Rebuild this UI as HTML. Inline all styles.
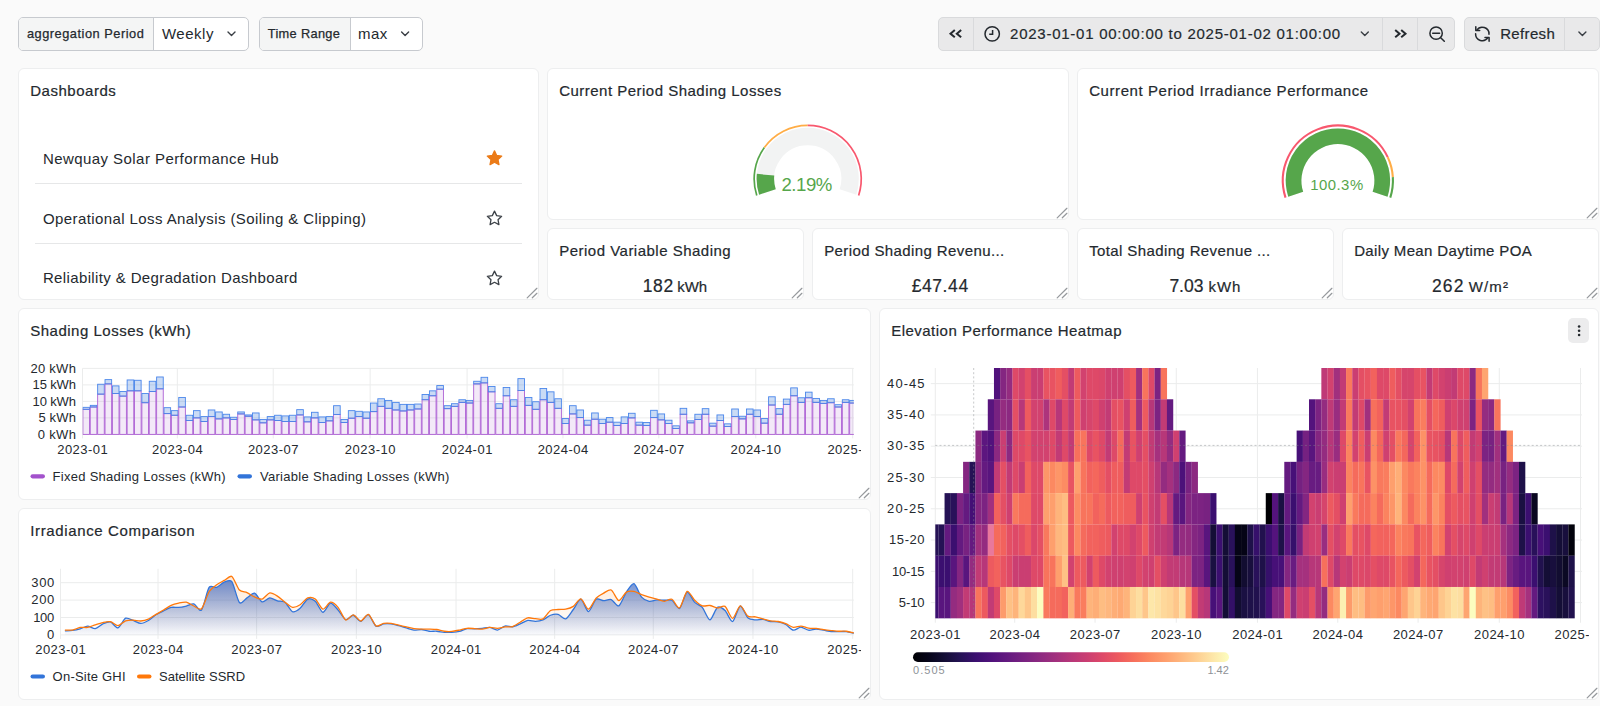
<!DOCTYPE html>
<html lang="en"><head><meta charset="utf-8"><title>Newquay Solar Performance Hub</title><style>
html,body{margin:0;padding:0}
body{width:1600px;height:706px;overflow:hidden;background:#fafafa;position:relative;font-family:"Liberation Sans",sans-serif;}
.t{position:absolute;white-space:pre;line-height:1;}
.panel{position:absolute;background:#fff;border:1px solid #edeeef;border-radius:6px;box-sizing:border-box;}
.ctl{position:absolute;box-sizing:border-box;border:1px solid #c7cacf;border-radius:5px;background:#fff;overflow:hidden}
.ctl .lab{position:absolute;left:0;top:0;bottom:0;background:#f4f5f5;border-right:1px solid #c7cacf}
.btn{position:absolute;box-sizing:border-box;background:#e9e9ea;border:1px solid #d9dadc;}
svg{position:absolute;left:0;top:0;overflow:visible}
.hr{position:absolute;height:1px;background:#e6e7e8}
</style></head><body>
<div class="panel" style="left:18px;top:68px;width:521px;height:232px"></div>
<div class="panel" style="left:547px;top:68px;width:522px;height:152px"></div>
<div class="panel" style="left:1077px;top:68px;width:522px;height:152px"></div>
<div class="panel" style="left:547px;top:228px;width:257px;height:72px"></div>
<div class="panel" style="left:812px;top:228px;width:257px;height:72px"></div>
<div class="panel" style="left:1077px;top:228px;width:257px;height:72px"></div>
<div class="panel" style="left:1342px;top:228px;width:257px;height:72px"></div>
<div class="panel" style="left:18px;top:308px;width:853px;height:192px"></div>
<div class="panel" style="left:18px;top:508px;width:853px;height:192px"></div>
<div class="panel" style="left:879px;top:308px;width:720px;height:392px"></div>
<svg width="1600" height="706"><path d="M536.9 288.3 L527.2 297.9 M536.9 293.3 L532.3 297.8" stroke="#96999d" stroke-width="1.25" fill="none" stroke-linecap="round"/></svg>
<svg width="1600" height="706"><path d="M1066.9 208.3 L1057.2 217.9 M1066.9 213.3 L1062.3 217.8" stroke="#96999d" stroke-width="1.25" fill="none" stroke-linecap="round"/></svg>
<svg width="1600" height="706"><path d="M1596.9 208.3 L1587.2 217.9 M1596.9 213.3 L1592.3 217.8" stroke="#96999d" stroke-width="1.25" fill="none" stroke-linecap="round"/></svg>
<svg width="1600" height="706"><path d="M801.9 288.3 L792.2 297.9 M801.9 293.3 L797.3 297.8" stroke="#96999d" stroke-width="1.25" fill="none" stroke-linecap="round"/></svg>
<svg width="1600" height="706"><path d="M1066.9 288.3 L1057.2 297.9 M1066.9 293.3 L1062.3 297.8" stroke="#96999d" stroke-width="1.25" fill="none" stroke-linecap="round"/></svg>
<svg width="1600" height="706"><path d="M1331.9 288.3 L1322.2 297.9 M1331.9 293.3 L1327.3 297.8" stroke="#96999d" stroke-width="1.25" fill="none" stroke-linecap="round"/></svg>
<svg width="1600" height="706"><path d="M1596.9 288.3 L1587.2 297.9 M1596.9 293.3 L1592.3 297.8" stroke="#96999d" stroke-width="1.25" fill="none" stroke-linecap="round"/></svg>
<svg width="1600" height="706"><path d="M868.9 488.3 L859.2 497.9 M868.9 493.3 L864.3 497.8" stroke="#96999d" stroke-width="1.25" fill="none" stroke-linecap="round"/></svg>
<svg width="1600" height="706"><path d="M868.9 688.3 L859.2 697.9 M868.9 693.3 L864.3 697.8" stroke="#96999d" stroke-width="1.25" fill="none" stroke-linecap="round"/></svg>
<svg width="1600" height="706"><path d="M1596.9 688.3 L1587.2 697.9 M1596.9 693.3 L1592.3 697.8" stroke="#96999d" stroke-width="1.25" fill="none" stroke-linecap="round"/></svg>
<div class="ctl" style="left:18px;top:17px;width:231px;height:34px"><div class="lab" style="width:134px"></div></div>
<div class="ctl" style="left:259px;top:17px;width:164px;height:34px"><div class="lab" style="width:90px"></div></div>
<div class="btn" style="left:938px;top:17px;width:36px;height:34px;border-radius:5px 0 0 5px"></div>
<div class="btn" style="left:973px;top:17px;width:410px;height:34px;"></div>
<div class="btn" style="left:1382px;top:17px;width:36px;height:34px;"></div>
<div class="btn" style="left:1417px;top:17px;width:38px;height:34px;border-radius:0 5px 5px 0"></div>
<div class="btn" style="left:1464px;top:17px;width:101px;height:34px;border-radius:5px 0 0 5px"></div>
<div class="btn" style="left:1564px;top:17px;width:36px;height:34px;border-radius:0 5px 5px 0"></div>
<div class="hr" style="left:34.5px;top:183px;width:487px"></div>
<div class="hr" style="left:34.5px;top:243px;width:487px"></div>
<div style="position:absolute;left:1568.4px;top:317.8px;width:21px;height:25px;border-radius:5px;background:#ececed"></div>
<svg width="1600" height="706" viewBox="0 0 1600 706"><path d="M228.0 32.05 L231.5 35.55 L235.0 32.05" stroke="#3a3f45" stroke-width="1.4" fill="none" stroke-linecap="round" stroke-linejoin="round"/>
<path d="M401.6 32.05 L405.1 35.55 L408.6 32.05" stroke="#3a3f45" stroke-width="1.4" fill="none" stroke-linecap="round" stroke-linejoin="round"/>
<path d="M1361.3 32.05 L1364.8 35.55 L1368.3 32.05" stroke="#3a3f45" stroke-width="1.4" fill="none" stroke-linecap="round" stroke-linejoin="round"/>
<path d="M1578.9 32.05 L1582.4 35.55 L1585.9 32.05" stroke="#3a3f45" stroke-width="1.4" fill="none" stroke-linecap="round" stroke-linejoin="round"/>
<path d="M954.8 30.1 L950.5 33.7 L954.8 37.300000000000004" stroke="#24292e" stroke-width="2" fill="none" stroke-linejoin="miter"/><path d="M961.15 30.1 L956.85 33.7 L961.15 37.300000000000004" stroke="#24292e" stroke-width="2" fill="none" stroke-linejoin="miter"/>
<path d="M1395.2 30.1 L1399.5 33.7 L1395.2 37.300000000000004" stroke="#24292e" stroke-width="2" fill="none" stroke-linejoin="miter"/><path d="M1401.2 30.1 L1405.5 33.7 L1401.2 37.300000000000004" stroke="#24292e" stroke-width="2" fill="none" stroke-linejoin="miter"/>
<circle cx="992.2" cy="33.9" r="7.2" stroke="#24292e" stroke-width="1.5" fill="none"/><path d="M992.6 29.9 V34.2 H989.2" stroke="#24292e" stroke-width="1.5" fill="none"/>
<circle cx="1436.1" cy="33.15" r="6.2" stroke="#24292e" stroke-width="1.5" fill="none"/><path d="M1432.7 33.15 H1439.6 M1440.7 37.7 L1444.3 41.3" stroke="#24292e" stroke-width="1.5" fill="none" stroke-linecap="round"/>
<g stroke="#24292e" stroke-width="1.5" fill="none" stroke-linecap="round" stroke-linejoin="round"><path d="M1476.7 30.3 A6.7 6.7 0 0 1 1489 34.2"/><path d="M1475.8 26.7 V30.6 H1479.7"/><path d="M1475.6 33.8 A6.7 6.7 0 0 0 1487.9 37.7"/><path d="M1485 37.4 H1489.1 V41.3"/></g>
<polygon points="494.50,150.90 496.67,155.51 501.73,156.15 498.02,159.64 498.97,164.65 494.50,162.20 490.03,164.65 490.98,159.64 487.27,156.15 492.33,155.51" fill="#eb7b18" stroke="#eb7b18" stroke-width="1.3" stroke-linejoin="round"/>
<polygon points="494.50,211.10 496.67,215.61 501.63,216.28 498.02,219.74 498.91,224.67 494.50,222.30 490.09,224.67 490.98,219.74 487.37,216.28 492.33,215.61" fill="none" stroke="#3d4248" stroke-width="1.3" stroke-linejoin="round"/>
<polygon points="494.50,271.10 496.67,275.61 501.63,276.28 498.02,279.74 498.91,284.67 494.50,282.30 490.09,284.67 490.98,279.74 487.37,276.28 492.33,275.61" fill="none" stroke="#3d4248" stroke-width="1.3" stroke-linejoin="round"/>
<path d="M767.42 191.99 A42.35 42.35 0 1 1 847.98 191.99" stroke="#f2f3f3" stroke-width="17.5" fill="none"/><path d="M767.42 191.99 A42.35 42.35 0 0 1 765.56 174.73" stroke="#56a64b" stroke-width="17.5" fill="none"/><path d="M756.77 195.45 A53.55 53.55 0 0 1 764.38 147.42" stroke="#56a64b" stroke-width="1.7" fill="none"/><path d="M764.38 147.42 A53.55 53.55 0 0 1 807.70 125.35" stroke="#ffad46" stroke-width="1.7" fill="none"/><path d="M807.70 125.35 A53.55 53.55 0 0 1 858.63 195.45" stroke="#f8586e" stroke-width="1.7" fill="none"/>
<path d="M1295.72 194.30 A44.35 44.35 0 1 1 1380.08 194.30" stroke="#f2f3f3" stroke-width="15.700000000000003" fill="none"/><path d="M1295.72 194.30 A44.35 44.35 0 1 1 1380.08 194.30" stroke="#56a64b" stroke-width="15.700000000000003" fill="none"/><path d="M1285.54 197.61 A55.05 55.05 0 0 1 1387.71 157.16" stroke="#f8586e" stroke-width="2.1" fill="none"/><path d="M1387.71 157.16 A55.05 55.05 0 0 1 1392.84 177.14" stroke="#ffad46" stroke-width="2.1" fill="none"/><path d="M1392.84 177.14 A55.05 55.05 0 0 1 1390.26 197.61" stroke="#56a64b" stroke-width="2.1" fill="none"/>
<path d="M82.5 434.40 H853.8" stroke="#ebecec" stroke-width="1"/><path d="M82.5 417.90 H853.8" stroke="#ebecec" stroke-width="1"/><path d="M82.5 401.40 H853.8" stroke="#ebecec" stroke-width="1"/><path d="M82.5 384.90 H853.8" stroke="#ebecec" stroke-width="1"/><path d="M82.5 368.40 H853.8" stroke="#ebecec" stroke-width="1"/><path d="M82.50 368.4 V438.4" stroke="#ebecec" stroke-width="1"/><path d="M177.33 368.4 V438.4" stroke="#ebecec" stroke-width="1"/><path d="M273.21 368.4 V438.4" stroke="#ebecec" stroke-width="1"/><path d="M370.14 368.4 V438.4" stroke="#ebecec" stroke-width="1"/><path d="M467.08 368.4 V438.4" stroke="#ebecec" stroke-width="1"/><path d="M562.96 368.4 V438.4" stroke="#ebecec" stroke-width="1"/><path d="M658.84 368.4 V438.4" stroke="#ebecec" stroke-width="1"/><path d="M755.77 368.4 V438.4" stroke="#ebecec" stroke-width="1"/><path d="M852.70 368.4 V438.4" stroke="#ebecec" stroke-width="1"/><clipPath id="cb"><rect x="82.5" y="366.4" width="771.3" height="69.0"/></clipPath><g clip-path="url(#cb)"><rect x="82.90" y="409.32" width="6.62" height="25.08" fill="#a352cc" fill-opacity="0.13" stroke="#ad60d4" stroke-width="0.9"/><rect x="82.90" y="407.34" width="6.62" height="1.98" fill="#3274d9" fill-opacity="0.26" stroke="#4a86ea" stroke-width="0.9"/><rect x="90.27" y="407.01" width="6.62" height="27.39" fill="#a352cc" fill-opacity="0.13" stroke="#ad60d4" stroke-width="0.9"/><rect x="90.27" y="405.36" width="6.62" height="1.65" fill="#3274d9" fill-opacity="0.26" stroke="#4a86ea" stroke-width="0.9"/><rect x="97.65" y="394.14" width="6.62" height="40.26" fill="#a352cc" fill-opacity="0.13" stroke="#ad60d4" stroke-width="0.9"/><rect x="97.65" y="384.24" width="6.62" height="9.90" fill="#3274d9" fill-opacity="0.26" stroke="#4a86ea" stroke-width="0.9"/><rect x="105.02" y="383.91" width="6.62" height="50.49" fill="#a352cc" fill-opacity="0.13" stroke="#ad60d4" stroke-width="0.9"/><rect x="105.02" y="379.62" width="6.62" height="4.29" fill="#3274d9" fill-opacity="0.26" stroke="#4a86ea" stroke-width="0.9"/><rect x="112.39" y="393.48" width="6.62" height="40.92" fill="#a352cc" fill-opacity="0.13" stroke="#ad60d4" stroke-width="0.9"/><rect x="112.39" y="385.89" width="6.62" height="7.59" fill="#3274d9" fill-opacity="0.26" stroke="#4a86ea" stroke-width="0.9"/><rect x="119.77" y="396.12" width="6.62" height="38.28" fill="#a352cc" fill-opacity="0.13" stroke="#ad60d4" stroke-width="0.9"/><rect x="119.77" y="391.50" width="6.62" height="4.62" fill="#3274d9" fill-opacity="0.26" stroke="#4a86ea" stroke-width="0.9"/><rect x="127.14" y="390.84" width="6.62" height="43.56" fill="#a352cc" fill-opacity="0.13" stroke="#ad60d4" stroke-width="0.9"/><rect x="127.14" y="379.95" width="6.62" height="10.89" fill="#3274d9" fill-opacity="0.26" stroke="#4a86ea" stroke-width="0.9"/><rect x="134.51" y="390.84" width="6.62" height="43.56" fill="#a352cc" fill-opacity="0.13" stroke="#ad60d4" stroke-width="0.9"/><rect x="134.51" y="380.28" width="6.62" height="10.56" fill="#3274d9" fill-opacity="0.26" stroke="#4a86ea" stroke-width="0.9"/><rect x="141.88" y="402.72" width="6.62" height="31.68" fill="#a352cc" fill-opacity="0.13" stroke="#ad60d4" stroke-width="0.9"/><rect x="141.88" y="393.48" width="6.62" height="9.24" fill="#3274d9" fill-opacity="0.26" stroke="#4a86ea" stroke-width="0.9"/><rect x="149.26" y="391.50" width="6.62" height="42.90" fill="#a352cc" fill-opacity="0.13" stroke="#ad60d4" stroke-width="0.9"/><rect x="149.26" y="381.27" width="6.62" height="10.23" fill="#3274d9" fill-opacity="0.26" stroke="#4a86ea" stroke-width="0.9"/><rect x="156.63" y="388.86" width="6.62" height="45.54" fill="#a352cc" fill-opacity="0.13" stroke="#ad60d4" stroke-width="0.9"/><rect x="156.63" y="376.98" width="6.62" height="11.88" fill="#3274d9" fill-opacity="0.26" stroke="#4a86ea" stroke-width="0.9"/><rect x="164.00" y="413.61" width="6.62" height="20.79" fill="#a352cc" fill-opacity="0.13" stroke="#ad60d4" stroke-width="0.9"/><rect x="164.00" y="407.67" width="6.62" height="5.94" fill="#3274d9" fill-opacity="0.26" stroke="#4a86ea" stroke-width="0.9"/><rect x="171.38" y="415.26" width="6.62" height="19.14" fill="#a352cc" fill-opacity="0.13" stroke="#ad60d4" stroke-width="0.9"/><rect x="171.38" y="410.64" width="6.62" height="4.62" fill="#3274d9" fill-opacity="0.26" stroke="#4a86ea" stroke-width="0.9"/><rect x="178.75" y="407.01" width="6.62" height="27.39" fill="#a352cc" fill-opacity="0.13" stroke="#ad60d4" stroke-width="0.9"/><rect x="178.75" y="397.44" width="6.62" height="9.57" fill="#3274d9" fill-opacity="0.26" stroke="#4a86ea" stroke-width="0.9"/><rect x="186.12" y="420.54" width="6.62" height="13.86" fill="#a352cc" fill-opacity="0.13" stroke="#ad60d4" stroke-width="0.9"/><rect x="186.12" y="415.26" width="6.62" height="5.28" fill="#3274d9" fill-opacity="0.26" stroke="#4a86ea" stroke-width="0.9"/><rect x="193.50" y="417.90" width="6.62" height="16.50" fill="#a352cc" fill-opacity="0.13" stroke="#ad60d4" stroke-width="0.9"/><rect x="193.50" y="410.64" width="6.62" height="7.26" fill="#3274d9" fill-opacity="0.26" stroke="#4a86ea" stroke-width="0.9"/><rect x="200.87" y="421.53" width="6.62" height="12.87" fill="#a352cc" fill-opacity="0.13" stroke="#ad60d4" stroke-width="0.9"/><rect x="200.87" y="416.58" width="6.62" height="4.95" fill="#3274d9" fill-opacity="0.26" stroke="#4a86ea" stroke-width="0.9"/><rect x="208.24" y="416.58" width="6.62" height="17.82" fill="#a352cc" fill-opacity="0.13" stroke="#ad60d4" stroke-width="0.9"/><rect x="208.24" y="409.98" width="6.62" height="6.60" fill="#3274d9" fill-opacity="0.26" stroke="#4a86ea" stroke-width="0.9"/><rect x="215.61" y="418.89" width="6.62" height="15.51" fill="#a352cc" fill-opacity="0.13" stroke="#ad60d4" stroke-width="0.9"/><rect x="215.61" y="411.96" width="6.62" height="6.93" fill="#3274d9" fill-opacity="0.26" stroke="#4a86ea" stroke-width="0.9"/><rect x="222.99" y="417.90" width="6.62" height="16.50" fill="#a352cc" fill-opacity="0.13" stroke="#ad60d4" stroke-width="0.9"/><rect x="222.99" y="414.27" width="6.62" height="3.63" fill="#3274d9" fill-opacity="0.26" stroke="#4a86ea" stroke-width="0.9"/><rect x="230.36" y="419.55" width="6.62" height="14.85" fill="#a352cc" fill-opacity="0.13" stroke="#ad60d4" stroke-width="0.9"/><rect x="230.36" y="417.24" width="6.62" height="2.31" fill="#3274d9" fill-opacity="0.26" stroke="#4a86ea" stroke-width="0.9"/><rect x="237.73" y="413.94" width="6.62" height="20.46" fill="#a352cc" fill-opacity="0.13" stroke="#ad60d4" stroke-width="0.9"/><rect x="237.73" y="411.96" width="6.62" height="1.98" fill="#3274d9" fill-opacity="0.26" stroke="#4a86ea" stroke-width="0.9"/><rect x="245.11" y="416.25" width="6.62" height="18.15" fill="#a352cc" fill-opacity="0.13" stroke="#ad60d4" stroke-width="0.9"/><rect x="245.11" y="414.93" width="6.62" height="1.32" fill="#3274d9" fill-opacity="0.26" stroke="#4a86ea" stroke-width="0.9"/><rect x="252.48" y="419.88" width="6.62" height="14.52" fill="#a352cc" fill-opacity="0.13" stroke="#ad60d4" stroke-width="0.9"/><rect x="252.48" y="412.95" width="6.62" height="6.93" fill="#3274d9" fill-opacity="0.26" stroke="#4a86ea" stroke-width="0.9"/><rect x="259.85" y="422.85" width="6.62" height="11.55" fill="#a352cc" fill-opacity="0.13" stroke="#ad60d4" stroke-width="0.9"/><rect x="259.85" y="419.55" width="6.62" height="3.30" fill="#3274d9" fill-opacity="0.26" stroke="#4a86ea" stroke-width="0.9"/><rect x="267.23" y="419.88" width="6.62" height="14.52" fill="#a352cc" fill-opacity="0.13" stroke="#ad60d4" stroke-width="0.9"/><rect x="267.23" y="416.58" width="6.62" height="3.30" fill="#3274d9" fill-opacity="0.26" stroke="#4a86ea" stroke-width="0.9"/><rect x="274.60" y="420.54" width="6.62" height="13.86" fill="#a352cc" fill-opacity="0.13" stroke="#ad60d4" stroke-width="0.9"/><rect x="274.60" y="415.26" width="6.62" height="5.28" fill="#3274d9" fill-opacity="0.26" stroke="#4a86ea" stroke-width="0.9"/><rect x="281.97" y="421.53" width="6.62" height="12.87" fill="#a352cc" fill-opacity="0.13" stroke="#ad60d4" stroke-width="0.9"/><rect x="281.97" y="415.92" width="6.62" height="5.61" fill="#3274d9" fill-opacity="0.26" stroke="#4a86ea" stroke-width="0.9"/><rect x="289.34" y="421.53" width="6.62" height="12.87" fill="#a352cc" fill-opacity="0.13" stroke="#ad60d4" stroke-width="0.9"/><rect x="289.34" y="415.26" width="6.62" height="6.27" fill="#3274d9" fill-opacity="0.26" stroke="#4a86ea" stroke-width="0.9"/><rect x="296.72" y="414.93" width="6.62" height="19.47" fill="#a352cc" fill-opacity="0.13" stroke="#ad60d4" stroke-width="0.9"/><rect x="296.72" y="409.65" width="6.62" height="5.28" fill="#3274d9" fill-opacity="0.26" stroke="#4a86ea" stroke-width="0.9"/><rect x="304.09" y="421.86" width="6.62" height="12.54" fill="#a352cc" fill-opacity="0.13" stroke="#ad60d4" stroke-width="0.9"/><rect x="304.09" y="416.91" width="6.62" height="4.95" fill="#3274d9" fill-opacity="0.26" stroke="#4a86ea" stroke-width="0.9"/><rect x="311.46" y="417.90" width="6.62" height="16.50" fill="#a352cc" fill-opacity="0.13" stroke="#ad60d4" stroke-width="0.9"/><rect x="311.46" y="412.29" width="6.62" height="5.61" fill="#3274d9" fill-opacity="0.26" stroke="#4a86ea" stroke-width="0.9"/><rect x="318.84" y="422.52" width="6.62" height="11.88" fill="#a352cc" fill-opacity="0.13" stroke="#ad60d4" stroke-width="0.9"/><rect x="318.84" y="416.91" width="6.62" height="5.61" fill="#3274d9" fill-opacity="0.26" stroke="#4a86ea" stroke-width="0.9"/><rect x="326.21" y="420.87" width="6.62" height="13.53" fill="#a352cc" fill-opacity="0.13" stroke="#ad60d4" stroke-width="0.9"/><rect x="326.21" y="416.58" width="6.62" height="4.29" fill="#3274d9" fill-opacity="0.26" stroke="#4a86ea" stroke-width="0.9"/><rect x="333.58" y="414.44" width="6.62" height="19.96" fill="#a352cc" fill-opacity="0.13" stroke="#ad60d4" stroke-width="0.9"/><rect x="333.58" y="405.69" width="6.62" height="8.75" fill="#3274d9" fill-opacity="0.26" stroke="#4a86ea" stroke-width="0.9"/><rect x="340.95" y="422.52" width="6.62" height="11.88" fill="#a352cc" fill-opacity="0.13" stroke="#ad60d4" stroke-width="0.9"/><rect x="340.95" y="419.55" width="6.62" height="2.97" fill="#3274d9" fill-opacity="0.26" stroke="#4a86ea" stroke-width="0.9"/><rect x="348.33" y="418.23" width="6.62" height="16.17" fill="#a352cc" fill-opacity="0.13" stroke="#ad60d4" stroke-width="0.9"/><rect x="348.33" y="410.64" width="6.62" height="7.59" fill="#3274d9" fill-opacity="0.26" stroke="#4a86ea" stroke-width="0.9"/><rect x="355.70" y="416.58" width="6.62" height="17.82" fill="#a352cc" fill-opacity="0.13" stroke="#ad60d4" stroke-width="0.9"/><rect x="355.70" y="411.30" width="6.62" height="5.28" fill="#3274d9" fill-opacity="0.26" stroke="#4a86ea" stroke-width="0.9"/><rect x="363.07" y="418.23" width="6.62" height="16.17" fill="#a352cc" fill-opacity="0.13" stroke="#ad60d4" stroke-width="0.9"/><rect x="363.07" y="411.96" width="6.62" height="6.27" fill="#3274d9" fill-opacity="0.26" stroke="#4a86ea" stroke-width="0.9"/><rect x="370.45" y="411.63" width="6.62" height="22.77" fill="#a352cc" fill-opacity="0.13" stroke="#ad60d4" stroke-width="0.9"/><rect x="370.45" y="403.05" width="6.62" height="8.58" fill="#3274d9" fill-opacity="0.26" stroke="#4a86ea" stroke-width="0.9"/><rect x="377.82" y="406.35" width="6.62" height="28.05" fill="#a352cc" fill-opacity="0.13" stroke="#ad60d4" stroke-width="0.9"/><rect x="377.82" y="398.76" width="6.62" height="7.59" fill="#3274d9" fill-opacity="0.26" stroke="#4a86ea" stroke-width="0.9"/><rect x="385.19" y="408.33" width="6.62" height="26.07" fill="#a352cc" fill-opacity="0.13" stroke="#ad60d4" stroke-width="0.9"/><rect x="385.19" y="400.41" width="6.62" height="7.92" fill="#3274d9" fill-opacity="0.26" stroke="#4a86ea" stroke-width="0.9"/><rect x="392.57" y="409.98" width="6.62" height="24.42" fill="#a352cc" fill-opacity="0.13" stroke="#ad60d4" stroke-width="0.9"/><rect x="392.57" y="402.39" width="6.62" height="7.59" fill="#3274d9" fill-opacity="0.26" stroke="#4a86ea" stroke-width="0.9"/><rect x="399.94" y="410.97" width="6.62" height="23.43" fill="#a352cc" fill-opacity="0.13" stroke="#ad60d4" stroke-width="0.9"/><rect x="399.94" y="404.37" width="6.62" height="6.60" fill="#3274d9" fill-opacity="0.26" stroke="#4a86ea" stroke-width="0.9"/><rect x="407.31" y="409.98" width="6.62" height="24.42" fill="#a352cc" fill-opacity="0.13" stroke="#ad60d4" stroke-width="0.9"/><rect x="407.31" y="404.37" width="6.62" height="5.61" fill="#3274d9" fill-opacity="0.26" stroke="#4a86ea" stroke-width="0.9"/><rect x="414.69" y="408.99" width="6.62" height="25.41" fill="#a352cc" fill-opacity="0.13" stroke="#ad60d4" stroke-width="0.9"/><rect x="414.69" y="404.04" width="6.62" height="4.95" fill="#3274d9" fill-opacity="0.26" stroke="#4a86ea" stroke-width="0.9"/><rect x="422.06" y="399.75" width="6.62" height="34.65" fill="#a352cc" fill-opacity="0.13" stroke="#ad60d4" stroke-width="0.9"/><rect x="422.06" y="394.47" width="6.62" height="5.28" fill="#3274d9" fill-opacity="0.26" stroke="#4a86ea" stroke-width="0.9"/><rect x="429.43" y="395.79" width="6.62" height="38.61" fill="#a352cc" fill-opacity="0.13" stroke="#ad60d4" stroke-width="0.9"/><rect x="429.43" y="390.84" width="6.62" height="4.95" fill="#3274d9" fill-opacity="0.26" stroke="#4a86ea" stroke-width="0.9"/><rect x="436.80" y="389.19" width="6.62" height="45.21" fill="#a352cc" fill-opacity="0.13" stroke="#ad60d4" stroke-width="0.9"/><rect x="436.80" y="385.56" width="6.62" height="3.63" fill="#3274d9" fill-opacity="0.26" stroke="#4a86ea" stroke-width="0.9"/><rect x="444.18" y="408.66" width="6.62" height="25.74" fill="#a352cc" fill-opacity="0.13" stroke="#ad60d4" stroke-width="0.9"/><rect x="444.18" y="405.69" width="6.62" height="2.97" fill="#3274d9" fill-opacity="0.26" stroke="#4a86ea" stroke-width="0.9"/><rect x="451.55" y="406.35" width="6.62" height="28.05" fill="#a352cc" fill-opacity="0.13" stroke="#ad60d4" stroke-width="0.9"/><rect x="451.55" y="403.71" width="6.62" height="2.64" fill="#3274d9" fill-opacity="0.26" stroke="#4a86ea" stroke-width="0.9"/><rect x="458.92" y="402.39" width="6.62" height="32.01" fill="#a352cc" fill-opacity="0.13" stroke="#ad60d4" stroke-width="0.9"/><rect x="458.92" y="399.75" width="6.62" height="2.64" fill="#3274d9" fill-opacity="0.26" stroke="#4a86ea" stroke-width="0.9"/><rect x="466.30" y="403.05" width="6.62" height="31.35" fill="#a352cc" fill-opacity="0.13" stroke="#ad60d4" stroke-width="0.9"/><rect x="466.30" y="400.41" width="6.62" height="2.64" fill="#3274d9" fill-opacity="0.26" stroke="#4a86ea" stroke-width="0.9"/><rect x="473.67" y="383.91" width="6.62" height="50.49" fill="#a352cc" fill-opacity="0.13" stroke="#ad60d4" stroke-width="0.9"/><rect x="473.67" y="381.27" width="6.62" height="2.64" fill="#3274d9" fill-opacity="0.26" stroke="#4a86ea" stroke-width="0.9"/><rect x="481.04" y="382.92" width="6.62" height="51.48" fill="#a352cc" fill-opacity="0.13" stroke="#ad60d4" stroke-width="0.9"/><rect x="481.04" y="377.31" width="6.62" height="5.61" fill="#3274d9" fill-opacity="0.26" stroke="#4a86ea" stroke-width="0.9"/><rect x="488.41" y="391.83" width="6.62" height="42.57" fill="#a352cc" fill-opacity="0.13" stroke="#ad60d4" stroke-width="0.9"/><rect x="488.41" y="386.55" width="6.62" height="5.28" fill="#3274d9" fill-opacity="0.26" stroke="#4a86ea" stroke-width="0.9"/><rect x="495.79" y="408.33" width="6.62" height="26.07" fill="#a352cc" fill-opacity="0.13" stroke="#ad60d4" stroke-width="0.9"/><rect x="495.79" y="403.71" width="6.62" height="4.62" fill="#3274d9" fill-opacity="0.26" stroke="#4a86ea" stroke-width="0.9"/><rect x="503.16" y="395.79" width="6.62" height="38.61" fill="#a352cc" fill-opacity="0.13" stroke="#ad60d4" stroke-width="0.9"/><rect x="503.16" y="387.54" width="6.62" height="8.25" fill="#3274d9" fill-opacity="0.26" stroke="#4a86ea" stroke-width="0.9"/><rect x="510.53" y="406.35" width="6.62" height="28.05" fill="#a352cc" fill-opacity="0.13" stroke="#ad60d4" stroke-width="0.9"/><rect x="510.53" y="399.75" width="6.62" height="6.60" fill="#3274d9" fill-opacity="0.26" stroke="#4a86ea" stroke-width="0.9"/><rect x="517.91" y="390.51" width="6.62" height="43.89" fill="#a352cc" fill-opacity="0.13" stroke="#ad60d4" stroke-width="0.9"/><rect x="517.91" y="378.63" width="6.62" height="11.88" fill="#3274d9" fill-opacity="0.26" stroke="#4a86ea" stroke-width="0.9"/><rect x="525.28" y="405.36" width="6.62" height="29.04" fill="#a352cc" fill-opacity="0.13" stroke="#ad60d4" stroke-width="0.9"/><rect x="525.28" y="397.44" width="6.62" height="7.92" fill="#3274d9" fill-opacity="0.26" stroke="#4a86ea" stroke-width="0.9"/><rect x="532.65" y="409.32" width="6.62" height="25.08" fill="#a352cc" fill-opacity="0.13" stroke="#ad60d4" stroke-width="0.9"/><rect x="532.65" y="401.73" width="6.62" height="7.59" fill="#3274d9" fill-opacity="0.26" stroke="#4a86ea" stroke-width="0.9"/><rect x="540.03" y="399.75" width="6.62" height="34.65" fill="#a352cc" fill-opacity="0.13" stroke="#ad60d4" stroke-width="0.9"/><rect x="540.03" y="388.53" width="6.62" height="11.22" fill="#3274d9" fill-opacity="0.26" stroke="#4a86ea" stroke-width="0.9"/><rect x="547.40" y="402.39" width="6.62" height="32.01" fill="#a352cc" fill-opacity="0.13" stroke="#ad60d4" stroke-width="0.9"/><rect x="547.40" y="391.83" width="6.62" height="10.56" fill="#3274d9" fill-opacity="0.26" stroke="#4a86ea" stroke-width="0.9"/><rect x="554.77" y="408.33" width="6.62" height="26.07" fill="#a352cc" fill-opacity="0.13" stroke="#ad60d4" stroke-width="0.9"/><rect x="554.77" y="398.76" width="6.62" height="9.57" fill="#3274d9" fill-opacity="0.26" stroke="#4a86ea" stroke-width="0.9"/><rect x="562.14" y="423.51" width="6.62" height="10.89" fill="#a352cc" fill-opacity="0.13" stroke="#ad60d4" stroke-width="0.9"/><rect x="562.14" y="418.56" width="6.62" height="4.95" fill="#3274d9" fill-opacity="0.26" stroke="#4a86ea" stroke-width="0.9"/><rect x="569.52" y="413.94" width="6.62" height="20.46" fill="#a352cc" fill-opacity="0.13" stroke="#ad60d4" stroke-width="0.9"/><rect x="569.52" y="405.69" width="6.62" height="8.25" fill="#3274d9" fill-opacity="0.26" stroke="#4a86ea" stroke-width="0.9"/><rect x="576.89" y="417.57" width="6.62" height="16.83" fill="#a352cc" fill-opacity="0.13" stroke="#ad60d4" stroke-width="0.9"/><rect x="576.89" y="409.98" width="6.62" height="7.59" fill="#3274d9" fill-opacity="0.26" stroke="#4a86ea" stroke-width="0.9"/><rect x="584.26" y="425.16" width="6.62" height="9.24" fill="#a352cc" fill-opacity="0.13" stroke="#ad60d4" stroke-width="0.9"/><rect x="584.26" y="420.21" width="6.62" height="4.95" fill="#3274d9" fill-opacity="0.26" stroke="#4a86ea" stroke-width="0.9"/><rect x="591.64" y="419.22" width="6.62" height="15.18" fill="#a352cc" fill-opacity="0.13" stroke="#ad60d4" stroke-width="0.9"/><rect x="591.64" y="412.95" width="6.62" height="6.27" fill="#3274d9" fill-opacity="0.26" stroke="#4a86ea" stroke-width="0.9"/><rect x="599.01" y="423.51" width="6.62" height="10.89" fill="#a352cc" fill-opacity="0.13" stroke="#ad60d4" stroke-width="0.9"/><rect x="599.01" y="419.22" width="6.62" height="4.29" fill="#3274d9" fill-opacity="0.26" stroke="#4a86ea" stroke-width="0.9"/><rect x="606.38" y="422.19" width="6.62" height="12.21" fill="#a352cc" fill-opacity="0.13" stroke="#ad60d4" stroke-width="0.9"/><rect x="606.38" y="417.57" width="6.62" height="4.62" fill="#3274d9" fill-opacity="0.26" stroke="#4a86ea" stroke-width="0.9"/><rect x="613.76" y="425.49" width="6.62" height="8.91" fill="#a352cc" fill-opacity="0.13" stroke="#ad60d4" stroke-width="0.9"/><rect x="613.76" y="422.19" width="6.62" height="3.30" fill="#3274d9" fill-opacity="0.26" stroke="#4a86ea" stroke-width="0.9"/><rect x="621.13" y="423.51" width="6.62" height="10.89" fill="#a352cc" fill-opacity="0.13" stroke="#ad60d4" stroke-width="0.9"/><rect x="621.13" y="416.91" width="6.62" height="6.60" fill="#3274d9" fill-opacity="0.26" stroke="#4a86ea" stroke-width="0.9"/><rect x="628.50" y="417.90" width="6.62" height="16.50" fill="#a352cc" fill-opacity="0.13" stroke="#ad60d4" stroke-width="0.9"/><rect x="628.50" y="413.28" width="6.62" height="4.62" fill="#3274d9" fill-opacity="0.26" stroke="#4a86ea" stroke-width="0.9"/><rect x="635.88" y="425.16" width="6.62" height="9.24" fill="#a352cc" fill-opacity="0.13" stroke="#ad60d4" stroke-width="0.9"/><rect x="635.88" y="422.19" width="6.62" height="2.97" fill="#3274d9" fill-opacity="0.26" stroke="#4a86ea" stroke-width="0.9"/><rect x="643.25" y="425.49" width="6.62" height="8.91" fill="#a352cc" fill-opacity="0.13" stroke="#ad60d4" stroke-width="0.9"/><rect x="643.25" y="422.52" width="6.62" height="2.97" fill="#3274d9" fill-opacity="0.26" stroke="#4a86ea" stroke-width="0.9"/><rect x="650.62" y="417.57" width="6.62" height="16.83" fill="#a352cc" fill-opacity="0.13" stroke="#ad60d4" stroke-width="0.9"/><rect x="650.62" y="410.31" width="6.62" height="7.26" fill="#3274d9" fill-opacity="0.26" stroke="#4a86ea" stroke-width="0.9"/><rect x="657.99" y="419.88" width="6.62" height="14.52" fill="#a352cc" fill-opacity="0.13" stroke="#ad60d4" stroke-width="0.9"/><rect x="657.99" y="413.94" width="6.62" height="5.94" fill="#3274d9" fill-opacity="0.26" stroke="#4a86ea" stroke-width="0.9"/><rect x="665.37" y="423.51" width="6.62" height="10.89" fill="#a352cc" fill-opacity="0.13" stroke="#ad60d4" stroke-width="0.9"/><rect x="665.37" y="420.21" width="6.62" height="3.30" fill="#3274d9" fill-opacity="0.26" stroke="#4a86ea" stroke-width="0.9"/><rect x="672.74" y="428.46" width="6.62" height="5.94" fill="#a352cc" fill-opacity="0.13" stroke="#ad60d4" stroke-width="0.9"/><rect x="672.74" y="425.82" width="6.62" height="2.64" fill="#3274d9" fill-opacity="0.26" stroke="#4a86ea" stroke-width="0.9"/><rect x="680.11" y="414.27" width="6.62" height="20.13" fill="#a352cc" fill-opacity="0.13" stroke="#ad60d4" stroke-width="0.9"/><rect x="680.11" y="408.33" width="6.62" height="5.94" fill="#3274d9" fill-opacity="0.26" stroke="#4a86ea" stroke-width="0.9"/><rect x="687.49" y="422.85" width="6.62" height="11.55" fill="#a352cc" fill-opacity="0.13" stroke="#ad60d4" stroke-width="0.9"/><rect x="687.49" y="420.87" width="6.62" height="1.98" fill="#3274d9" fill-opacity="0.26" stroke="#4a86ea" stroke-width="0.9"/><rect x="694.86" y="419.55" width="6.62" height="14.85" fill="#a352cc" fill-opacity="0.13" stroke="#ad60d4" stroke-width="0.9"/><rect x="694.86" y="414.27" width="6.62" height="5.28" fill="#3274d9" fill-opacity="0.26" stroke="#4a86ea" stroke-width="0.9"/><rect x="702.23" y="414.27" width="6.62" height="20.13" fill="#a352cc" fill-opacity="0.13" stroke="#ad60d4" stroke-width="0.9"/><rect x="702.23" y="408.66" width="6.62" height="5.61" fill="#3274d9" fill-opacity="0.26" stroke="#4a86ea" stroke-width="0.9"/><rect x="709.61" y="426.15" width="6.62" height="8.25" fill="#a352cc" fill-opacity="0.13" stroke="#ad60d4" stroke-width="0.9"/><rect x="709.61" y="423.18" width="6.62" height="2.97" fill="#3274d9" fill-opacity="0.26" stroke="#4a86ea" stroke-width="0.9"/><rect x="716.98" y="420.54" width="6.62" height="13.86" fill="#a352cc" fill-opacity="0.13" stroke="#ad60d4" stroke-width="0.9"/><rect x="716.98" y="414.93" width="6.62" height="5.61" fill="#3274d9" fill-opacity="0.26" stroke="#4a86ea" stroke-width="0.9"/><rect x="724.35" y="426.48" width="6.62" height="7.92" fill="#a352cc" fill-opacity="0.13" stroke="#ad60d4" stroke-width="0.9"/><rect x="724.35" y="423.84" width="6.62" height="2.64" fill="#3274d9" fill-opacity="0.26" stroke="#4a86ea" stroke-width="0.9"/><rect x="731.72" y="416.58" width="6.62" height="17.82" fill="#a352cc" fill-opacity="0.13" stroke="#ad60d4" stroke-width="0.9"/><rect x="731.72" y="408.99" width="6.62" height="7.59" fill="#3274d9" fill-opacity="0.26" stroke="#4a86ea" stroke-width="0.9"/><rect x="739.10" y="418.89" width="6.62" height="15.51" fill="#a352cc" fill-opacity="0.13" stroke="#ad60d4" stroke-width="0.9"/><rect x="739.10" y="416.25" width="6.62" height="2.64" fill="#3274d9" fill-opacity="0.26" stroke="#4a86ea" stroke-width="0.9"/><rect x="746.47" y="414.27" width="6.62" height="20.13" fill="#a352cc" fill-opacity="0.13" stroke="#ad60d4" stroke-width="0.9"/><rect x="746.47" y="408.99" width="6.62" height="5.28" fill="#3274d9" fill-opacity="0.26" stroke="#4a86ea" stroke-width="0.9"/><rect x="753.84" y="416.58" width="6.62" height="17.82" fill="#a352cc" fill-opacity="0.13" stroke="#ad60d4" stroke-width="0.9"/><rect x="753.84" y="409.98" width="6.62" height="6.60" fill="#3274d9" fill-opacity="0.26" stroke="#4a86ea" stroke-width="0.9"/><rect x="761.22" y="423.18" width="6.62" height="11.22" fill="#a352cc" fill-opacity="0.13" stroke="#ad60d4" stroke-width="0.9"/><rect x="761.22" y="418.56" width="6.62" height="4.62" fill="#3274d9" fill-opacity="0.26" stroke="#4a86ea" stroke-width="0.9"/><rect x="768.59" y="405.03" width="6.62" height="29.37" fill="#a352cc" fill-opacity="0.13" stroke="#ad60d4" stroke-width="0.9"/><rect x="768.59" y="396.78" width="6.62" height="8.25" fill="#3274d9" fill-opacity="0.26" stroke="#4a86ea" stroke-width="0.9"/><rect x="775.96" y="414.27" width="6.62" height="20.13" fill="#a352cc" fill-opacity="0.13" stroke="#ad60d4" stroke-width="0.9"/><rect x="775.96" y="408.66" width="6.62" height="5.61" fill="#3274d9" fill-opacity="0.26" stroke="#4a86ea" stroke-width="0.9"/><rect x="783.34" y="404.37" width="6.62" height="30.03" fill="#a352cc" fill-opacity="0.13" stroke="#ad60d4" stroke-width="0.9"/><rect x="783.34" y="399.09" width="6.62" height="5.28" fill="#3274d9" fill-opacity="0.26" stroke="#4a86ea" stroke-width="0.9"/><rect x="790.71" y="395.79" width="6.62" height="38.61" fill="#a352cc" fill-opacity="0.13" stroke="#ad60d4" stroke-width="0.9"/><rect x="790.71" y="387.87" width="6.62" height="7.92" fill="#3274d9" fill-opacity="0.26" stroke="#4a86ea" stroke-width="0.9"/><rect x="798.08" y="402.39" width="6.62" height="32.01" fill="#a352cc" fill-opacity="0.13" stroke="#ad60d4" stroke-width="0.9"/><rect x="798.08" y="397.77" width="6.62" height="4.62" fill="#3274d9" fill-opacity="0.26" stroke="#4a86ea" stroke-width="0.9"/><rect x="805.45" y="397.77" width="6.62" height="36.63" fill="#a352cc" fill-opacity="0.13" stroke="#ad60d4" stroke-width="0.9"/><rect x="805.45" y="392.16" width="6.62" height="5.61" fill="#3274d9" fill-opacity="0.26" stroke="#4a86ea" stroke-width="0.9"/><rect x="812.83" y="402.39" width="6.62" height="32.01" fill="#a352cc" fill-opacity="0.13" stroke="#ad60d4" stroke-width="0.9"/><rect x="812.83" y="398.43" width="6.62" height="3.96" fill="#3274d9" fill-opacity="0.26" stroke="#4a86ea" stroke-width="0.9"/><rect x="820.20" y="403.38" width="6.62" height="31.02" fill="#a352cc" fill-opacity="0.13" stroke="#ad60d4" stroke-width="0.9"/><rect x="820.20" y="400.41" width="6.62" height="2.97" fill="#3274d9" fill-opacity="0.26" stroke="#4a86ea" stroke-width="0.9"/><rect x="827.57" y="402.72" width="6.62" height="31.68" fill="#a352cc" fill-opacity="0.13" stroke="#ad60d4" stroke-width="0.9"/><rect x="827.57" y="398.76" width="6.62" height="3.96" fill="#3274d9" fill-opacity="0.26" stroke="#4a86ea" stroke-width="0.9"/><rect x="834.95" y="407.01" width="6.62" height="27.39" fill="#a352cc" fill-opacity="0.13" stroke="#ad60d4" stroke-width="0.9"/><rect x="834.95" y="404.70" width="6.62" height="2.31" fill="#3274d9" fill-opacity="0.26" stroke="#4a86ea" stroke-width="0.9"/><rect x="842.32" y="402.39" width="6.62" height="32.01" fill="#a352cc" fill-opacity="0.13" stroke="#ad60d4" stroke-width="0.9"/><rect x="842.32" y="399.75" width="6.62" height="2.64" fill="#3274d9" fill-opacity="0.26" stroke="#4a86ea" stroke-width="0.9"/><rect x="849.69" y="403.05" width="6.62" height="31.35" fill="#a352cc" fill-opacity="0.13" stroke="#ad60d4" stroke-width="0.9"/><rect x="849.69" y="400.41" width="6.62" height="2.64" fill="#3274d9" fill-opacity="0.26" stroke="#4a86ea" stroke-width="0.9"/></g>
<rect x="30.5" y="474.2" width="14.5" height="4.2" rx="2.1" fill="#a352cc"/>
<rect x="237.5" y="474.2" width="14.5" height="4.2" rx="2.1" fill="#3274d9"/>
<path d="M60.5 634.90 H853.8" stroke="#ebecec" stroke-width="1"/><path d="M60.5 617.50 H853.8" stroke="#ebecec" stroke-width="1"/><path d="M60.5 600.10 H853.8" stroke="#ebecec" stroke-width="1"/><path d="M60.5 582.70 H853.8" stroke="#ebecec" stroke-width="1"/><path d="M60.50 568.8 V638.9" stroke="#ebecec" stroke-width="1"/><path d="M158.03 568.8 V638.9" stroke="#ebecec" stroke-width="1"/><path d="M256.65 568.8 V638.9" stroke="#ebecec" stroke-width="1"/><path d="M356.35 568.8 V638.9" stroke="#ebecec" stroke-width="1"/><path d="M456.04 568.8 V638.9" stroke="#ebecec" stroke-width="1"/><path d="M554.66 568.8 V638.9" stroke="#ebecec" stroke-width="1"/><path d="M653.28 568.8 V638.9" stroke="#ebecec" stroke-width="1"/><path d="M752.97 568.8 V638.9" stroke="#ebecec" stroke-width="1"/><path d="M852.67 568.8 V638.9" stroke="#ebecec" stroke-width="1"/><defs><linearGradient id="gb" x1="0" y1="0" x2="0" y2="1"><stop offset="0" stop-color="#3d69c4" stop-opacity="0.74"/><stop offset="1" stop-color="#3f66b8" stop-opacity="0.03"/></linearGradient><linearGradient id="go" x1="0" y1="0" x2="0" y2="1"><stop offset="0" stop-color="#ff780a" stop-opacity="0.17"/><stop offset="1" stop-color="#ff780a" stop-opacity="0.0"/></linearGradient></defs><path d="M64.90 630.03 C65.89 630.03 70.52 630.37 72.49 630.03 C74.46 629.69 78.10 627.76 80.08 627.42 C82.05 627.08 85.69 627.76 87.66 627.42 C89.64 627.08 93.28 625.44 95.25 624.81 C97.22 624.17 100.87 622.95 102.84 622.55 C104.81 622.14 108.46 621.27 110.43 621.68 C112.40 622.08 116.04 625.79 118.02 625.68 C119.99 625.56 123.63 621.53 125.60 620.81 C127.58 620.08 131.22 620.09 133.19 620.11 C135.16 620.13 138.81 621.12 140.78 620.98 C142.75 620.84 146.40 619.93 148.37 619.07 C150.34 618.21 153.98 615.54 155.96 614.37 C157.93 613.19 161.57 611.19 163.54 610.02 C165.52 608.84 169.16 606.22 171.13 605.32 C173.10 604.42 176.75 603.47 178.72 603.06 C180.69 602.65 184.34 601.80 186.31 602.19 C188.28 602.57 191.92 605.16 193.90 606.02 C195.87 606.88 199.51 610.65 201.48 608.80 C203.46 606.95 207.10 594.87 209.07 591.75 C211.04 588.63 214.69 586.26 216.66 584.79 C218.63 583.32 222.28 581.52 224.25 580.44 C226.22 579.35 229.86 575.19 231.84 576.44 C233.81 577.68 237.45 587.90 239.42 590.01 C241.40 592.11 245.04 591.71 247.01 592.62 C248.98 593.52 252.63 596.13 254.60 596.97 C256.57 597.80 260.22 599.58 262.19 599.06 C264.16 598.54 267.80 593.35 269.78 592.97 C271.75 592.58 275.39 594.90 277.36 596.10 C279.34 597.30 282.98 600.72 284.95 602.19 C286.92 603.66 290.57 607.07 292.54 607.41 C294.51 607.75 298.16 606.04 300.13 604.80 C302.10 603.55 305.74 598.58 307.72 597.84 C309.69 597.09 313.33 597.59 315.30 599.06 C317.28 600.53 320.92 608.74 322.89 609.15 C324.86 609.56 328.51 602.41 330.48 602.19 C332.45 601.96 336.10 605.10 338.07 607.41 C340.04 609.72 343.68 618.96 345.66 619.94 C347.63 620.91 351.27 614.75 353.24 614.89 C355.22 615.03 358.86 621.05 360.83 620.98 C362.80 620.91 366.45 613.73 368.42 614.37 C370.39 615.00 374.04 624.68 376.01 625.85 C377.98 627.03 381.62 623.73 383.60 623.42 C385.57 623.10 389.21 623.19 391.18 623.42 C393.16 623.64 396.80 624.70 398.77 625.16 C400.74 625.61 404.39 626.44 406.36 626.90 C408.33 627.35 411.98 628.34 413.95 628.64 C415.92 628.93 419.56 629.09 421.54 629.16 C423.51 629.23 427.15 629.11 429.12 629.16 C431.10 629.20 434.74 629.23 436.71 629.51 C438.68 629.78 442.33 631.00 444.30 631.25 C446.27 631.49 449.92 631.58 451.89 631.42 C453.86 631.26 457.50 630.44 459.48 630.03 C461.45 629.62 465.09 628.47 467.06 628.29 C469.04 628.11 472.68 628.52 474.65 628.64 C476.62 628.75 480.27 629.32 482.24 629.16 C484.21 629.00 487.86 627.53 489.83 627.42 C491.80 627.30 495.44 628.36 497.42 628.29 C499.39 628.22 503.03 627.12 505.00 626.90 C506.98 626.67 510.62 627.16 512.59 626.55 C514.56 625.94 518.21 623.33 520.18 622.20 C522.15 621.07 525.80 618.30 527.77 617.85 C529.74 617.40 533.38 618.58 535.36 618.72 C537.33 618.85 540.97 619.96 542.94 618.89 C544.92 617.83 548.56 611.76 550.53 610.54 C552.50 609.32 556.15 609.68 558.12 609.50 C560.09 609.32 563.74 609.56 565.71 609.15 C567.68 608.74 571.32 607.70 573.30 606.36 C575.27 605.03 578.91 598.52 580.88 598.88 C582.86 599.24 586.50 609.24 588.47 609.15 C590.44 609.06 594.09 600.27 596.06 598.19 C598.03 596.10 601.68 594.20 603.65 593.14 C605.62 592.08 609.26 589.04 611.24 590.01 C613.21 590.98 616.85 600.35 618.82 600.62 C620.80 600.89 624.44 593.29 626.41 592.10 C628.38 590.90 632.03 591.06 634.00 591.40 C635.97 591.74 639.62 593.96 641.59 594.71 C643.56 595.45 647.20 596.55 649.18 597.14 C651.15 597.73 654.79 598.69 656.76 599.23 C658.74 599.77 662.38 601.32 664.35 601.32 C666.32 601.32 669.97 598.37 671.94 599.23 C673.91 600.09 677.56 608.95 679.53 607.93 C681.50 606.91 685.14 592.40 687.12 591.40 C689.09 590.40 692.73 598.40 694.70 600.27 C696.68 602.15 700.32 605.16 702.29 605.84 C704.26 606.52 707.91 605.22 709.88 605.49 C711.85 605.77 715.50 607.82 717.47 607.93 C719.44 608.04 723.08 605.01 725.06 606.36 C727.03 607.72 730.67 618.44 732.64 618.37 C734.62 618.30 738.26 606.14 740.23 605.84 C742.20 605.55 745.85 614.68 747.82 616.11 C749.79 617.53 753.44 616.44 755.41 616.80 C757.38 617.17 761.02 618.37 763.00 618.89 C764.97 619.41 768.61 620.47 770.58 620.81 C772.56 621.15 776.20 621.14 778.17 621.50 C780.14 621.86 783.79 622.82 785.76 623.59 C787.73 624.36 791.38 627.10 793.35 627.42 C795.32 627.73 798.96 625.94 800.94 626.03 C802.91 626.12 806.55 627.80 808.52 628.11 C810.50 628.43 814.14 628.26 816.11 628.46 C818.08 628.67 821.73 629.41 823.70 629.68 C825.67 629.95 829.32 630.35 831.29 630.55 C833.26 630.75 836.90 631.16 838.88 631.25 C840.85 631.34 844.52 631.04 846.46 631.25 C848.40 631.45 852.85 632.61 853.80 632.81 L853.80 634.9 L64.90 634.9 Z" fill="url(#go)" /><path d="M64.90 630.90 C65.89 630.83 70.52 630.65 72.49 630.38 C74.46 630.10 78.10 629.35 80.08 628.81 C82.05 628.27 85.69 626.22 87.66 626.20 C89.64 626.18 93.28 628.93 95.25 628.64 C97.22 628.34 100.87 624.82 102.84 623.94 C104.81 623.06 108.46 621.33 110.43 621.85 C112.40 622.37 116.04 628.42 118.02 627.94 C119.99 627.46 123.63 619.17 125.60 618.20 C127.58 617.22 131.22 619.78 133.19 620.46 C135.16 621.14 138.81 623.42 140.78 623.42 C142.75 623.42 146.40 621.59 148.37 620.46 C150.34 619.33 153.98 615.96 155.96 614.72 C157.93 613.47 161.57 611.84 163.54 610.89 C165.52 609.94 169.16 607.86 171.13 607.41 C173.10 606.96 176.75 607.59 178.72 607.41 C180.69 607.23 184.34 606.47 186.31 606.02 C188.28 605.56 191.92 603.41 193.90 603.93 C195.87 604.45 199.51 612.17 201.48 610.02 C203.46 607.87 207.10 590.34 209.07 587.40 C211.04 584.46 214.69 588.08 216.66 587.40 C218.63 586.72 222.28 582.92 224.25 582.18 C226.22 581.43 229.86 579.01 231.84 581.66 C233.81 584.30 237.45 600.43 239.42 602.54 C241.40 604.64 245.04 599.06 247.01 597.84 C248.98 596.62 252.63 592.62 254.60 593.14 C256.57 593.66 260.22 601.23 262.19 601.84 C264.16 602.45 267.80 597.97 269.78 597.84 C271.75 597.70 275.39 600.23 277.36 600.80 C279.34 601.36 282.98 600.76 284.95 602.19 C286.92 603.61 290.57 610.97 292.54 611.76 C294.51 612.55 298.16 609.93 300.13 608.28 C302.10 606.63 305.74 599.96 307.72 599.06 C309.69 598.15 313.33 599.60 315.30 601.32 C317.28 603.04 320.92 612.05 322.89 612.28 C324.86 612.51 328.51 603.35 330.48 603.06 C332.45 602.76 336.10 607.87 338.07 610.02 C340.04 612.17 343.68 618.91 345.66 619.59 C347.63 620.27 351.27 615.01 353.24 615.24 C355.22 615.46 358.86 621.40 360.83 621.33 C362.80 621.26 366.45 614.08 368.42 614.72 C370.39 615.35 374.04 625.00 376.01 626.20 C377.98 627.40 381.62 624.23 383.60 623.94 C385.57 623.64 389.21 623.71 391.18 623.94 C393.16 624.16 396.80 625.16 398.77 625.68 C400.74 626.20 404.39 627.37 406.36 627.94 C408.33 628.51 411.98 629.82 413.95 630.03 C415.92 630.23 419.56 629.35 421.54 629.51 C423.51 629.66 427.15 631.02 429.12 631.25 C431.10 631.47 434.74 631.11 436.71 631.25 C438.68 631.38 442.33 632.15 444.30 632.29 C446.27 632.43 449.92 632.40 451.89 632.29 C453.86 632.18 457.50 631.90 459.48 631.42 C461.45 630.94 465.09 628.98 467.06 628.64 C469.04 628.30 472.68 628.86 474.65 628.81 C476.62 628.76 480.27 628.47 482.24 628.29 C484.21 628.11 487.86 627.19 489.83 627.42 C491.80 627.64 495.44 630.21 497.42 630.03 C499.39 629.85 503.03 626.43 505.00 626.03 C506.98 625.62 510.62 627.17 512.59 626.90 C514.56 626.62 518.21 624.77 520.18 623.94 C522.15 623.10 525.80 620.80 527.77 620.46 C529.74 620.12 533.38 621.40 535.36 621.33 C537.33 621.26 540.97 620.73 542.94 619.94 C544.92 619.14 548.56 615.96 550.53 615.24 C552.50 614.51 556.15 613.89 558.12 614.37 C560.09 614.84 563.74 619.53 565.71 618.89 C567.68 618.26 571.32 612.05 573.30 609.50 C575.27 606.94 578.91 598.96 580.88 599.23 C582.86 599.50 586.50 611.58 588.47 611.58 C590.44 611.58 594.09 600.66 596.06 599.23 C598.03 597.80 601.68 600.58 603.65 600.62 C605.62 600.67 609.26 598.90 611.24 599.58 C613.21 600.26 616.85 606.81 618.82 605.84 C620.80 604.87 624.44 594.97 626.41 592.10 C628.38 589.22 632.03 583.09 634.00 583.74 C635.97 584.40 639.62 594.86 641.59 597.14 C643.56 599.43 647.20 600.96 649.18 601.32 C651.15 601.68 654.79 600.06 656.76 599.93 C658.74 599.79 662.38 600.23 664.35 600.27 C666.32 600.32 669.97 599.21 671.94 600.27 C673.91 601.34 677.56 609.52 679.53 608.45 C681.50 607.39 685.14 592.89 687.12 592.10 C689.09 591.30 692.73 600.37 694.70 602.36 C696.68 604.35 700.32 605.12 702.29 607.41 C704.26 609.69 707.91 619.94 709.88 619.94 C711.85 619.94 715.50 608.63 717.47 607.41 C719.44 606.19 723.08 608.71 725.06 610.54 C727.03 612.37 730.67 622.09 732.64 621.50 C734.62 620.91 738.26 606.49 740.23 606.02 C742.20 605.54 745.85 616.04 747.82 617.85 C749.79 619.66 753.44 619.73 755.41 619.94 C757.38 620.14 761.02 619.21 763.00 619.41 C764.97 619.62 768.61 621.19 770.58 621.50 C772.56 621.82 776.20 621.47 778.17 621.85 C780.14 622.23 783.79 623.37 785.76 624.46 C787.73 625.55 791.38 629.86 793.35 630.20 C795.32 630.54 798.96 627.07 800.94 627.07 C802.91 627.07 806.55 629.93 808.52 630.20 C810.50 630.47 814.14 629.16 816.11 629.16 C818.08 629.16 821.73 629.89 823.70 630.20 C825.67 630.52 829.32 631.41 831.29 631.59 C833.26 631.77 836.90 631.59 838.88 631.59 C840.85 631.59 844.52 631.39 846.46 631.59 C848.40 631.80 852.85 632.96 853.80 633.16 L853.80 634.9 L64.90 634.9 Z" fill="url(#gb)" /><path d="M64.90 630.90 C65.89 630.83 70.52 630.65 72.49 630.38 C74.46 630.10 78.10 629.35 80.08 628.81 C82.05 628.27 85.69 626.22 87.66 626.20 C89.64 626.18 93.28 628.93 95.25 628.64 C97.22 628.34 100.87 624.82 102.84 623.94 C104.81 623.06 108.46 621.33 110.43 621.85 C112.40 622.37 116.04 628.42 118.02 627.94 C119.99 627.46 123.63 619.17 125.60 618.20 C127.58 617.22 131.22 619.78 133.19 620.46 C135.16 621.14 138.81 623.42 140.78 623.42 C142.75 623.42 146.40 621.59 148.37 620.46 C150.34 619.33 153.98 615.96 155.96 614.72 C157.93 613.47 161.57 611.84 163.54 610.89 C165.52 609.94 169.16 607.86 171.13 607.41 C173.10 606.96 176.75 607.59 178.72 607.41 C180.69 607.23 184.34 606.47 186.31 606.02 C188.28 605.56 191.92 603.41 193.90 603.93 C195.87 604.45 199.51 612.17 201.48 610.02 C203.46 607.87 207.10 590.34 209.07 587.40 C211.04 584.46 214.69 588.08 216.66 587.40 C218.63 586.72 222.28 582.92 224.25 582.18 C226.22 581.43 229.86 579.01 231.84 581.66 C233.81 584.30 237.45 600.43 239.42 602.54 C241.40 604.64 245.04 599.06 247.01 597.84 C248.98 596.62 252.63 592.62 254.60 593.14 C256.57 593.66 260.22 601.23 262.19 601.84 C264.16 602.45 267.80 597.97 269.78 597.84 C271.75 597.70 275.39 600.23 277.36 600.80 C279.34 601.36 282.98 600.76 284.95 602.19 C286.92 603.61 290.57 610.97 292.54 611.76 C294.51 612.55 298.16 609.93 300.13 608.28 C302.10 606.63 305.74 599.96 307.72 599.06 C309.69 598.15 313.33 599.60 315.30 601.32 C317.28 603.04 320.92 612.05 322.89 612.28 C324.86 612.51 328.51 603.35 330.48 603.06 C332.45 602.76 336.10 607.87 338.07 610.02 C340.04 612.17 343.68 618.91 345.66 619.59 C347.63 620.27 351.27 615.01 353.24 615.24 C355.22 615.46 358.86 621.40 360.83 621.33 C362.80 621.26 366.45 614.08 368.42 614.72 C370.39 615.35 374.04 625.00 376.01 626.20 C377.98 627.40 381.62 624.23 383.60 623.94 C385.57 623.64 389.21 623.71 391.18 623.94 C393.16 624.16 396.80 625.16 398.77 625.68 C400.74 626.20 404.39 627.37 406.36 627.94 C408.33 628.51 411.98 629.82 413.95 630.03 C415.92 630.23 419.56 629.35 421.54 629.51 C423.51 629.66 427.15 631.02 429.12 631.25 C431.10 631.47 434.74 631.11 436.71 631.25 C438.68 631.38 442.33 632.15 444.30 632.29 C446.27 632.43 449.92 632.40 451.89 632.29 C453.86 632.18 457.50 631.90 459.48 631.42 C461.45 630.94 465.09 628.98 467.06 628.64 C469.04 628.30 472.68 628.86 474.65 628.81 C476.62 628.76 480.27 628.47 482.24 628.29 C484.21 628.11 487.86 627.19 489.83 627.42 C491.80 627.64 495.44 630.21 497.42 630.03 C499.39 629.85 503.03 626.43 505.00 626.03 C506.98 625.62 510.62 627.17 512.59 626.90 C514.56 626.62 518.21 624.77 520.18 623.94 C522.15 623.10 525.80 620.80 527.77 620.46 C529.74 620.12 533.38 621.40 535.36 621.33 C537.33 621.26 540.97 620.73 542.94 619.94 C544.92 619.14 548.56 615.96 550.53 615.24 C552.50 614.51 556.15 613.89 558.12 614.37 C560.09 614.84 563.74 619.53 565.71 618.89 C567.68 618.26 571.32 612.05 573.30 609.50 C575.27 606.94 578.91 598.96 580.88 599.23 C582.86 599.50 586.50 611.58 588.47 611.58 C590.44 611.58 594.09 600.66 596.06 599.23 C598.03 597.80 601.68 600.58 603.65 600.62 C605.62 600.67 609.26 598.90 611.24 599.58 C613.21 600.26 616.85 606.81 618.82 605.84 C620.80 604.87 624.44 594.97 626.41 592.10 C628.38 589.22 632.03 583.09 634.00 583.74 C635.97 584.40 639.62 594.86 641.59 597.14 C643.56 599.43 647.20 600.96 649.18 601.32 C651.15 601.68 654.79 600.06 656.76 599.93 C658.74 599.79 662.38 600.23 664.35 600.27 C666.32 600.32 669.97 599.21 671.94 600.27 C673.91 601.34 677.56 609.52 679.53 608.45 C681.50 607.39 685.14 592.89 687.12 592.10 C689.09 591.30 692.73 600.37 694.70 602.36 C696.68 604.35 700.32 605.12 702.29 607.41 C704.26 609.69 707.91 619.94 709.88 619.94 C711.85 619.94 715.50 608.63 717.47 607.41 C719.44 606.19 723.08 608.71 725.06 610.54 C727.03 612.37 730.67 622.09 732.64 621.50 C734.62 620.91 738.26 606.49 740.23 606.02 C742.20 605.54 745.85 616.04 747.82 617.85 C749.79 619.66 753.44 619.73 755.41 619.94 C757.38 620.14 761.02 619.21 763.00 619.41 C764.97 619.62 768.61 621.19 770.58 621.50 C772.56 621.82 776.20 621.47 778.17 621.85 C780.14 622.23 783.79 623.37 785.76 624.46 C787.73 625.55 791.38 629.86 793.35 630.20 C795.32 630.54 798.96 627.07 800.94 627.07 C802.91 627.07 806.55 629.93 808.52 630.20 C810.50 630.47 814.14 629.16 816.11 629.16 C818.08 629.16 821.73 629.89 823.70 630.20 C825.67 630.52 829.32 631.41 831.29 631.59 C833.26 631.77 836.90 631.59 838.88 631.59 C840.85 631.59 844.52 631.39 846.46 631.59 C848.40 631.80 852.85 632.96 853.80 633.16" stroke="#3274d9" stroke-width="1.3" fill="none"/><path d="M64.90 630.03 C65.89 630.03 70.52 630.37 72.49 630.03 C74.46 629.69 78.10 627.76 80.08 627.42 C82.05 627.08 85.69 627.76 87.66 627.42 C89.64 627.08 93.28 625.44 95.25 624.81 C97.22 624.17 100.87 622.95 102.84 622.55 C104.81 622.14 108.46 621.27 110.43 621.68 C112.40 622.08 116.04 625.79 118.02 625.68 C119.99 625.56 123.63 621.53 125.60 620.81 C127.58 620.08 131.22 620.09 133.19 620.11 C135.16 620.13 138.81 621.12 140.78 620.98 C142.75 620.84 146.40 619.93 148.37 619.07 C150.34 618.21 153.98 615.54 155.96 614.37 C157.93 613.19 161.57 611.19 163.54 610.02 C165.52 608.84 169.16 606.22 171.13 605.32 C173.10 604.42 176.75 603.47 178.72 603.06 C180.69 602.65 184.34 601.80 186.31 602.19 C188.28 602.57 191.92 605.16 193.90 606.02 C195.87 606.88 199.51 610.65 201.48 608.80 C203.46 606.95 207.10 594.87 209.07 591.75 C211.04 588.63 214.69 586.26 216.66 584.79 C218.63 583.32 222.28 581.52 224.25 580.44 C226.22 579.35 229.86 575.19 231.84 576.44 C233.81 577.68 237.45 587.90 239.42 590.01 C241.40 592.11 245.04 591.71 247.01 592.62 C248.98 593.52 252.63 596.13 254.60 596.97 C256.57 597.80 260.22 599.58 262.19 599.06 C264.16 598.54 267.80 593.35 269.78 592.97 C271.75 592.58 275.39 594.90 277.36 596.10 C279.34 597.30 282.98 600.72 284.95 602.19 C286.92 603.66 290.57 607.07 292.54 607.41 C294.51 607.75 298.16 606.04 300.13 604.80 C302.10 603.55 305.74 598.58 307.72 597.84 C309.69 597.09 313.33 597.59 315.30 599.06 C317.28 600.53 320.92 608.74 322.89 609.15 C324.86 609.56 328.51 602.41 330.48 602.19 C332.45 601.96 336.10 605.10 338.07 607.41 C340.04 609.72 343.68 618.96 345.66 619.94 C347.63 620.91 351.27 614.75 353.24 614.89 C355.22 615.03 358.86 621.05 360.83 620.98 C362.80 620.91 366.45 613.73 368.42 614.37 C370.39 615.00 374.04 624.68 376.01 625.85 C377.98 627.03 381.62 623.73 383.60 623.42 C385.57 623.10 389.21 623.19 391.18 623.42 C393.16 623.64 396.80 624.70 398.77 625.16 C400.74 625.61 404.39 626.44 406.36 626.90 C408.33 627.35 411.98 628.34 413.95 628.64 C415.92 628.93 419.56 629.09 421.54 629.16 C423.51 629.23 427.15 629.11 429.12 629.16 C431.10 629.20 434.74 629.23 436.71 629.51 C438.68 629.78 442.33 631.00 444.30 631.25 C446.27 631.49 449.92 631.58 451.89 631.42 C453.86 631.26 457.50 630.44 459.48 630.03 C461.45 629.62 465.09 628.47 467.06 628.29 C469.04 628.11 472.68 628.52 474.65 628.64 C476.62 628.75 480.27 629.32 482.24 629.16 C484.21 629.00 487.86 627.53 489.83 627.42 C491.80 627.30 495.44 628.36 497.42 628.29 C499.39 628.22 503.03 627.12 505.00 626.90 C506.98 626.67 510.62 627.16 512.59 626.55 C514.56 625.94 518.21 623.33 520.18 622.20 C522.15 621.07 525.80 618.30 527.77 617.85 C529.74 617.40 533.38 618.58 535.36 618.72 C537.33 618.85 540.97 619.96 542.94 618.89 C544.92 617.83 548.56 611.76 550.53 610.54 C552.50 609.32 556.15 609.68 558.12 609.50 C560.09 609.32 563.74 609.56 565.71 609.15 C567.68 608.74 571.32 607.70 573.30 606.36 C575.27 605.03 578.91 598.52 580.88 598.88 C582.86 599.24 586.50 609.24 588.47 609.15 C590.44 609.06 594.09 600.27 596.06 598.19 C598.03 596.10 601.68 594.20 603.65 593.14 C605.62 592.08 609.26 589.04 611.24 590.01 C613.21 590.98 616.85 600.35 618.82 600.62 C620.80 600.89 624.44 593.29 626.41 592.10 C628.38 590.90 632.03 591.06 634.00 591.40 C635.97 591.74 639.62 593.96 641.59 594.71 C643.56 595.45 647.20 596.55 649.18 597.14 C651.15 597.73 654.79 598.69 656.76 599.23 C658.74 599.77 662.38 601.32 664.35 601.32 C666.32 601.32 669.97 598.37 671.94 599.23 C673.91 600.09 677.56 608.95 679.53 607.93 C681.50 606.91 685.14 592.40 687.12 591.40 C689.09 590.40 692.73 598.40 694.70 600.27 C696.68 602.15 700.32 605.16 702.29 605.84 C704.26 606.52 707.91 605.22 709.88 605.49 C711.85 605.77 715.50 607.82 717.47 607.93 C719.44 608.04 723.08 605.01 725.06 606.36 C727.03 607.72 730.67 618.44 732.64 618.37 C734.62 618.30 738.26 606.14 740.23 605.84 C742.20 605.55 745.85 614.68 747.82 616.11 C749.79 617.53 753.44 616.44 755.41 616.80 C757.38 617.17 761.02 618.37 763.00 618.89 C764.97 619.41 768.61 620.47 770.58 620.81 C772.56 621.15 776.20 621.14 778.17 621.50 C780.14 621.86 783.79 622.82 785.76 623.59 C787.73 624.36 791.38 627.10 793.35 627.42 C795.32 627.73 798.96 625.94 800.94 626.03 C802.91 626.12 806.55 627.80 808.52 628.11 C810.50 628.43 814.14 628.26 816.11 628.46 C818.08 628.67 821.73 629.41 823.70 629.68 C825.67 629.95 829.32 630.35 831.29 630.55 C833.26 630.75 836.90 631.16 838.88 631.25 C840.85 631.34 844.52 631.04 846.46 631.25 C848.40 631.45 852.85 632.61 853.80 632.81" stroke="#ff780a" stroke-width="1.3" fill="none"/>
<rect x="30.5" y="674.4" width="14.5" height="4.2" rx="2.1" fill="#3274d9"/>
<rect x="137" y="674.4" width="14.5" height="4.2" rx="2.1" fill="#ff780a"/>
<path d="M930.8 383.64 H1582.0" stroke="#ebecec" stroke-width="1"/><path d="M930.8 414.92 H1582.0" stroke="#ebecec" stroke-width="1"/><path d="M930.8 446.20 H1582.0" stroke="#ebecec" stroke-width="1"/><path d="M930.8 477.48 H1582.0" stroke="#ebecec" stroke-width="1"/><path d="M930.8 508.76 H1582.0" stroke="#ebecec" stroke-width="1"/><path d="M930.8 540.04 H1582.0" stroke="#ebecec" stroke-width="1"/><path d="M930.8 571.32 H1582.0" stroke="#ebecec" stroke-width="1"/><path d="M930.8 602.60 H1582.0" stroke="#ebecec" stroke-width="1"/><path d="M935.30 368.0 V622.74" stroke="#ebecec" stroke-width="1"/><path d="M1014.73 368.0 V622.74" stroke="#ebecec" stroke-width="1"/><path d="M1095.05 368.0 V622.74" stroke="#ebecec" stroke-width="1"/><path d="M1176.25 368.0 V622.74" stroke="#ebecec" stroke-width="1"/><path d="M1257.45 368.0 V622.74" stroke="#ebecec" stroke-width="1"/><path d="M1337.77 368.0 V622.74" stroke="#ebecec" stroke-width="1"/><path d="M1418.08 368.0 V622.74" stroke="#ebecec" stroke-width="1"/><path d="M1499.28 368.0 V622.74" stroke="#ebecec" stroke-width="1"/><path d="M1580.48 368.0 V622.74" stroke="#ebecec" stroke-width="1"/><clipPath id="ch"><rect x="935.3" y="367.0" width="645.7" height="252.24"/></clipPath><g clip-path="url(#ch)"><rect x="993.97" y="368.00" width="6.30" height="31.38" fill="#51127c"/><rect x="1000.15" y="368.00" width="6.30" height="31.38" fill="#842681"/><rect x="1006.32" y="368.00" width="6.30" height="31.38" fill="#942c80"/><rect x="1012.50" y="368.00" width="6.30" height="31.38" fill="#de4968"/><rect x="1018.68" y="368.00" width="6.30" height="31.38" fill="#d2426f"/><rect x="1024.86" y="368.00" width="6.30" height="31.38" fill="#e44f64"/><rect x="1031.03" y="368.00" width="6.30" height="31.38" fill="#ca3e72"/><rect x="1037.21" y="368.00" width="6.30" height="31.38" fill="#ca3e72"/><rect x="1043.39" y="368.00" width="6.30" height="31.38" fill="#e85362"/><rect x="1049.56" y="368.00" width="6.30" height="31.38" fill="#e85362"/><rect x="1055.74" y="368.00" width="6.30" height="31.38" fill="#ef5d5e"/><rect x="1061.92" y="368.00" width="6.30" height="31.38" fill="#e44f64"/><rect x="1068.09" y="368.00" width="6.30" height="31.38" fill="#c23b75"/><rect x="1074.27" y="368.00" width="6.30" height="31.38" fill="#ed5a5f"/><rect x="1080.45" y="368.00" width="6.30" height="31.38" fill="#d2426f"/><rect x="1086.62" y="368.00" width="6.30" height="31.38" fill="#de4968"/><rect x="1092.80" y="368.00" width="6.30" height="31.38" fill="#de4968"/><rect x="1098.98" y="368.00" width="6.30" height="31.38" fill="#db476a"/><rect x="1105.16" y="368.00" width="6.30" height="31.38" fill="#cf4070"/><rect x="1111.33" y="368.00" width="6.30" height="31.38" fill="#cf4070"/><rect x="1117.51" y="368.00" width="6.30" height="31.38" fill="#cf4070"/><rect x="1123.69" y="368.00" width="6.30" height="31.38" fill="#e44f64"/><rect x="1129.86" y="368.00" width="6.30" height="31.38" fill="#ed5a5f"/><rect x="1136.04" y="368.00" width="6.30" height="31.38" fill="#a1307e"/><rect x="1142.22" y="368.00" width="6.30" height="31.38" fill="#f8745c"/><rect x="1148.39" y="368.00" width="6.30" height="31.38" fill="#de4968"/><rect x="1154.57" y="368.00" width="6.30" height="31.38" fill="#7c2382"/><rect x="1160.75" y="368.00" width="6.30" height="31.38" fill="#f8745c"/><rect x="1321.35" y="368.00" width="6.30" height="31.38" fill="#bf3a77"/><rect x="1327.53" y="368.00" width="6.30" height="31.38" fill="#d2426f"/><rect x="1333.70" y="368.00" width="6.30" height="31.38" fill="#a1307e"/><rect x="1339.88" y="368.00" width="6.30" height="31.38" fill="#c23b75"/><rect x="1346.06" y="368.00" width="6.30" height="31.38" fill="#f9795d"/><rect x="1352.24" y="368.00" width="6.30" height="31.38" fill="#ca3e72"/><rect x="1358.41" y="368.00" width="6.30" height="31.38" fill="#e44f64"/><rect x="1364.59" y="368.00" width="6.30" height="31.38" fill="#e85362"/><rect x="1370.77" y="368.00" width="6.30" height="31.38" fill="#f2625d"/><rect x="1376.94" y="368.00" width="6.30" height="31.38" fill="#de4968"/><rect x="1383.12" y="368.00" width="6.30" height="31.38" fill="#de4968"/><rect x="1389.30" y="368.00" width="6.30" height="31.38" fill="#ef5d5e"/><rect x="1395.47" y="368.00" width="6.30" height="31.38" fill="#e44f64"/><rect x="1401.65" y="368.00" width="6.30" height="31.38" fill="#d6456c"/><rect x="1407.83" y="368.00" width="6.30" height="31.38" fill="#d6456c"/><rect x="1414.01" y="368.00" width="6.30" height="31.38" fill="#e44f64"/><rect x="1420.18" y="368.00" width="6.30" height="31.38" fill="#e85362"/><rect x="1426.36" y="368.00" width="6.30" height="31.38" fill="#c23b75"/><rect x="1432.54" y="368.00" width="6.30" height="31.38" fill="#de4968"/><rect x="1438.71" y="368.00" width="6.30" height="31.38" fill="#d2426f"/><rect x="1444.89" y="368.00" width="6.30" height="31.38" fill="#ca3e72"/><rect x="1451.07" y="368.00" width="6.30" height="31.38" fill="#c23b75"/><rect x="1457.24" y="368.00" width="6.30" height="31.38" fill="#de4968"/><rect x="1463.42" y="368.00" width="6.30" height="31.38" fill="#de4968"/><rect x="1469.60" y="368.00" width="6.30" height="31.38" fill="#8c2981"/><rect x="1475.78" y="368.00" width="6.30" height="31.38" fill="#f8745c"/><rect x="1481.95" y="368.00" width="6.30" height="31.38" fill="#fea571"/><rect x="987.79" y="399.28" width="6.30" height="31.38" fill="#59157e"/><rect x="993.97" y="399.28" width="6.30" height="31.38" fill="#782281"/><rect x="1000.15" y="399.28" width="6.30" height="31.38" fill="#942c80"/><rect x="1006.32" y="399.28" width="6.30" height="31.38" fill="#8c2981"/><rect x="1012.50" y="399.28" width="6.30" height="31.38" fill="#e44f64"/><rect x="1018.68" y="399.28" width="6.30" height="31.38" fill="#b73779"/><rect x="1024.86" y="399.28" width="6.30" height="31.38" fill="#ed5a5f"/><rect x="1031.03" y="399.28" width="6.30" height="31.38" fill="#d2426f"/><rect x="1037.21" y="399.28" width="6.30" height="31.38" fill="#d2426f"/><rect x="1043.39" y="399.28" width="6.30" height="31.38" fill="#ad347c"/><rect x="1049.56" y="399.28" width="6.30" height="31.38" fill="#de4968"/><rect x="1055.74" y="399.28" width="6.30" height="31.38" fill="#b73779"/><rect x="1061.92" y="399.28" width="6.30" height="31.38" fill="#de4968"/><rect x="1068.09" y="399.28" width="6.30" height="31.38" fill="#c23b75"/><rect x="1074.27" y="399.28" width="6.30" height="31.38" fill="#ed5a5f"/><rect x="1080.45" y="399.28" width="6.30" height="31.38" fill="#cf4070"/><rect x="1086.62" y="399.28" width="6.30" height="31.38" fill="#d6456c"/><rect x="1092.80" y="399.28" width="6.30" height="31.38" fill="#de4968"/><rect x="1098.98" y="399.28" width="6.30" height="31.38" fill="#cf4070"/><rect x="1105.16" y="399.28" width="6.30" height="31.38" fill="#c23b75"/><rect x="1111.33" y="399.28" width="6.30" height="31.38" fill="#e44f64"/><rect x="1117.51" y="399.28" width="6.30" height="31.38" fill="#e85362"/><rect x="1123.69" y="399.28" width="6.30" height="31.38" fill="#cf4070"/><rect x="1129.86" y="399.28" width="6.30" height="31.38" fill="#ef5d5e"/><rect x="1136.04" y="399.28" width="6.30" height="31.38" fill="#a5317e"/><rect x="1142.22" y="399.28" width="6.30" height="31.38" fill="#ed5a5f"/><rect x="1148.39" y="399.28" width="6.30" height="31.38" fill="#b73779"/><rect x="1154.57" y="399.28" width="6.30" height="31.38" fill="#7c2382"/><rect x="1160.75" y="399.28" width="6.30" height="31.38" fill="#c23b75"/><rect x="1166.93" y="399.28" width="6.30" height="31.38" fill="#641a80"/><rect x="1309.00" y="399.28" width="6.30" height="31.38" fill="#54137d"/><rect x="1315.17" y="399.28" width="6.30" height="31.38" fill="#7c2382"/><rect x="1321.35" y="399.28" width="6.30" height="31.38" fill="#942c80"/><rect x="1327.53" y="399.28" width="6.30" height="31.38" fill="#bf3a77"/><rect x="1333.70" y="399.28" width="6.30" height="31.38" fill="#992d80"/><rect x="1339.88" y="399.28" width="6.30" height="31.38" fill="#c23b75"/><rect x="1346.06" y="399.28" width="6.30" height="31.38" fill="#f9795d"/><rect x="1352.24" y="399.28" width="6.30" height="31.38" fill="#c23b75"/><rect x="1358.41" y="399.28" width="6.30" height="31.38" fill="#de4968"/><rect x="1364.59" y="399.28" width="6.30" height="31.38" fill="#a1307e"/><rect x="1370.77" y="399.28" width="6.30" height="31.38" fill="#f7705c"/><rect x="1376.94" y="399.28" width="6.30" height="31.38" fill="#f2625d"/><rect x="1383.12" y="399.28" width="6.30" height="31.38" fill="#c23b75"/><rect x="1389.30" y="399.28" width="6.30" height="31.38" fill="#e85362"/><rect x="1395.47" y="399.28" width="6.30" height="31.38" fill="#e85362"/><rect x="1401.65" y="399.28" width="6.30" height="31.38" fill="#e44f64"/><rect x="1407.83" y="399.28" width="6.30" height="31.38" fill="#d2426f"/><rect x="1414.01" y="399.28" width="6.30" height="31.38" fill="#f8745c"/><rect x="1420.18" y="399.28" width="6.30" height="31.38" fill="#fa7d5e"/><rect x="1426.36" y="399.28" width="6.30" height="31.38" fill="#e44f64"/><rect x="1432.54" y="399.28" width="6.30" height="31.38" fill="#f4675c"/><rect x="1438.71" y="399.28" width="6.30" height="31.38" fill="#ef5d5e"/><rect x="1444.89" y="399.28" width="6.30" height="31.38" fill="#cf4070"/><rect x="1451.07" y="399.28" width="6.30" height="31.38" fill="#db476a"/><rect x="1457.24" y="399.28" width="6.30" height="31.38" fill="#cf4070"/><rect x="1463.42" y="399.28" width="6.30" height="31.38" fill="#cf4070"/><rect x="1469.60" y="399.28" width="6.30" height="31.38" fill="#7c2382"/><rect x="1475.78" y="399.28" width="6.30" height="31.38" fill="#e85362"/><rect x="1481.95" y="399.28" width="6.30" height="31.38" fill="#942c80"/><rect x="1488.13" y="399.28" width="6.30" height="31.38" fill="#8c2981"/><rect x="1494.31" y="399.28" width="6.30" height="31.38" fill="#f8745c"/><rect x="975.44" y="430.56" width="6.30" height="31.38" fill="#8c2981"/><rect x="981.62" y="430.56" width="6.30" height="31.38" fill="#5c167f"/><rect x="987.79" y="430.56" width="6.30" height="31.38" fill="#51127c"/><rect x="993.97" y="430.56" width="6.30" height="31.38" fill="#8c2981"/><rect x="1000.15" y="430.56" width="6.30" height="31.38" fill="#ca3e72"/><rect x="1006.32" y="430.56" width="6.30" height="31.38" fill="#8c2981"/><rect x="1012.50" y="430.56" width="6.30" height="31.38" fill="#de4968"/><rect x="1018.68" y="430.56" width="6.30" height="31.38" fill="#de4968"/><rect x="1024.86" y="430.56" width="6.30" height="31.38" fill="#e85362"/><rect x="1031.03" y="430.56" width="6.30" height="31.38" fill="#d2426f"/><rect x="1037.21" y="430.56" width="6.30" height="31.38" fill="#d2426f"/><rect x="1043.39" y="430.56" width="6.30" height="31.38" fill="#d2426f"/><rect x="1049.56" y="430.56" width="6.30" height="31.38" fill="#de4968"/><rect x="1055.74" y="430.56" width="6.30" height="31.38" fill="#c23b75"/><rect x="1061.92" y="430.56" width="6.30" height="31.38" fill="#de4968"/><rect x="1068.09" y="430.56" width="6.30" height="31.38" fill="#c23b75"/><rect x="1074.27" y="430.56" width="6.30" height="31.38" fill="#f7705c"/><rect x="1080.45" y="430.56" width="6.30" height="31.38" fill="#f8745c"/><rect x="1086.62" y="430.56" width="6.30" height="31.38" fill="#de4968"/><rect x="1092.80" y="430.56" width="6.30" height="31.38" fill="#e85362"/><rect x="1098.98" y="430.56" width="6.30" height="31.38" fill="#de4968"/><rect x="1105.16" y="430.56" width="6.30" height="31.38" fill="#c23b75"/><rect x="1111.33" y="430.56" width="6.30" height="31.38" fill="#de4968"/><rect x="1117.51" y="430.56" width="6.30" height="31.38" fill="#f56b5c"/><rect x="1123.69" y="430.56" width="6.30" height="31.38" fill="#c23b75"/><rect x="1129.86" y="430.56" width="6.30" height="31.38" fill="#e85362"/><rect x="1136.04" y="430.56" width="6.30" height="31.38" fill="#cf4070"/><rect x="1142.22" y="430.56" width="6.30" height="31.38" fill="#e44f64"/><rect x="1148.39" y="430.56" width="6.30" height="31.38" fill="#c23b75"/><rect x="1154.57" y="430.56" width="6.30" height="31.38" fill="#a5317e"/><rect x="1160.75" y="430.56" width="6.30" height="31.38" fill="#b73779"/><rect x="1166.93" y="430.56" width="6.30" height="31.38" fill="#942c80"/><rect x="1173.10" y="430.56" width="6.30" height="31.38" fill="#cf4070"/><rect x="1179.28" y="430.56" width="6.30" height="31.38" fill="#641a80"/><rect x="1296.64" y="430.56" width="6.30" height="31.38" fill="#471078"/><rect x="1302.82" y="430.56" width="6.30" height="31.38" fill="#752181"/><rect x="1309.00" y="430.56" width="6.30" height="31.38" fill="#59157e"/><rect x="1315.17" y="430.56" width="6.30" height="31.38" fill="#842681"/><rect x="1321.35" y="430.56" width="6.30" height="31.38" fill="#942c80"/><rect x="1327.53" y="430.56" width="6.30" height="31.38" fill="#b73779"/><rect x="1333.70" y="430.56" width="6.30" height="31.38" fill="#992d80"/><rect x="1339.88" y="430.56" width="6.30" height="31.38" fill="#de4968"/><rect x="1346.06" y="430.56" width="6.30" height="31.38" fill="#fb835f"/><rect x="1352.24" y="430.56" width="6.30" height="31.38" fill="#d2426f"/><rect x="1358.41" y="430.56" width="6.30" height="31.38" fill="#ef5d5e"/><rect x="1364.59" y="430.56" width="6.30" height="31.38" fill="#ca3e72"/><rect x="1370.77" y="430.56" width="6.30" height="31.38" fill="#fc8961"/><rect x="1376.94" y="430.56" width="6.30" height="31.38" fill="#f4675c"/><rect x="1383.12" y="430.56" width="6.30" height="31.38" fill="#cf4070"/><rect x="1389.30" y="430.56" width="6.30" height="31.38" fill="#e44f64"/><rect x="1395.47" y="430.56" width="6.30" height="31.38" fill="#f9795d"/><rect x="1401.65" y="430.56" width="6.30" height="31.38" fill="#f4675c"/><rect x="1407.83" y="430.56" width="6.30" height="31.38" fill="#d6456c"/><rect x="1414.01" y="430.56" width="6.30" height="31.38" fill="#f2625d"/><rect x="1420.18" y="430.56" width="6.30" height="31.38" fill="#fd9266"/><rect x="1426.36" y="430.56" width="6.30" height="31.38" fill="#e85362"/><rect x="1432.54" y="430.56" width="6.30" height="31.38" fill="#e85362"/><rect x="1438.71" y="430.56" width="6.30" height="31.38" fill="#e44f64"/><rect x="1444.89" y="430.56" width="6.30" height="31.38" fill="#b73779"/><rect x="1451.07" y="430.56" width="6.30" height="31.38" fill="#f8745c"/><rect x="1457.24" y="430.56" width="6.30" height="31.38" fill="#de4968"/><rect x="1463.42" y="430.56" width="6.30" height="31.38" fill="#ef5d5e"/><rect x="1469.60" y="430.56" width="6.30" height="31.38" fill="#c23b75"/><rect x="1475.78" y="430.56" width="6.30" height="31.38" fill="#d2426f"/><rect x="1481.95" y="430.56" width="6.30" height="31.38" fill="#7c2382"/><rect x="1488.13" y="430.56" width="6.30" height="31.38" fill="#782281"/><rect x="1494.31" y="430.56" width="6.30" height="31.38" fill="#a1307e"/><rect x="1500.48" y="430.56" width="6.30" height="31.38" fill="#641a80"/><rect x="1506.66" y="430.56" width="6.30" height="31.38" fill="#fc8961"/><rect x="963.09" y="461.84" width="6.30" height="31.38" fill="#842681"/><rect x="969.26" y="461.84" width="6.30" height="31.38" fill="#251255"/><rect x="975.44" y="461.84" width="6.30" height="31.38" fill="#842681"/><rect x="981.62" y="461.84" width="6.30" height="31.38" fill="#641a80"/><rect x="987.79" y="461.84" width="6.30" height="31.38" fill="#59157e"/><rect x="993.97" y="461.84" width="6.30" height="31.38" fill="#c23b75"/><rect x="1000.15" y="461.84" width="6.30" height="31.38" fill="#e44f64"/><rect x="1006.32" y="461.84" width="6.30" height="31.38" fill="#c23b75"/><rect x="1012.50" y="461.84" width="6.30" height="31.38" fill="#de4968"/><rect x="1018.68" y="461.84" width="6.30" height="31.38" fill="#ca3e72"/><rect x="1024.86" y="461.84" width="6.30" height="31.38" fill="#f2625d"/><rect x="1031.03" y="461.84" width="6.30" height="31.38" fill="#de4968"/><rect x="1037.21" y="461.84" width="6.30" height="31.38" fill="#de4968"/><rect x="1043.39" y="461.84" width="6.30" height="31.38" fill="#fd9668"/><rect x="1049.56" y="461.84" width="6.30" height="31.38" fill="#fc8961"/><rect x="1055.74" y="461.84" width="6.30" height="31.38" fill="#fd9668"/><rect x="1061.92" y="461.84" width="6.30" height="31.38" fill="#fc8c63"/><rect x="1068.09" y="461.84" width="6.30" height="31.38" fill="#e85362"/><rect x="1074.27" y="461.84" width="6.30" height="31.38" fill="#fe9f6d"/><rect x="1080.45" y="461.84" width="6.30" height="31.38" fill="#f8745c"/><rect x="1086.62" y="461.84" width="6.30" height="31.38" fill="#f2625d"/><rect x="1092.80" y="461.84" width="6.30" height="31.38" fill="#f4675c"/><rect x="1098.98" y="461.84" width="6.30" height="31.38" fill="#ef5d5e"/><rect x="1105.16" y="461.84" width="6.30" height="31.38" fill="#e44f64"/><rect x="1111.33" y="461.84" width="6.30" height="31.38" fill="#ef5d5e"/><rect x="1117.51" y="461.84" width="6.30" height="31.38" fill="#ef5d5e"/><rect x="1123.69" y="461.84" width="6.30" height="31.38" fill="#c23b75"/><rect x="1129.86" y="461.84" width="6.30" height="31.38" fill="#de4968"/><rect x="1136.04" y="461.84" width="6.30" height="31.38" fill="#de4968"/><rect x="1142.22" y="461.84" width="6.30" height="31.38" fill="#e44f64"/><rect x="1148.39" y="461.84" width="6.30" height="31.38" fill="#cf4070"/><rect x="1154.57" y="461.84" width="6.30" height="31.38" fill="#b73779"/><rect x="1160.75" y="461.84" width="6.30" height="31.38" fill="#942c80"/><rect x="1166.93" y="461.84" width="6.30" height="31.38" fill="#a5317e"/><rect x="1173.10" y="461.84" width="6.30" height="31.38" fill="#8c2981"/><rect x="1179.28" y="461.84" width="6.30" height="31.38" fill="#4c117a"/><rect x="1185.46" y="461.84" width="6.30" height="31.38" fill="#782281"/><rect x="1191.63" y="461.84" width="6.30" height="31.38" fill="#8c2981"/><rect x="1284.29" y="461.84" width="6.30" height="31.38" fill="#641a80"/><rect x="1290.47" y="461.84" width="6.30" height="31.38" fill="#471078"/><rect x="1296.64" y="461.84" width="6.30" height="31.38" fill="#752181"/><rect x="1302.82" y="461.84" width="6.30" height="31.38" fill="#842681"/><rect x="1309.00" y="461.84" width="6.30" height="31.38" fill="#681c81"/><rect x="1315.17" y="461.84" width="6.30" height="31.38" fill="#681c81"/><rect x="1321.35" y="461.84" width="6.30" height="31.38" fill="#992d80"/><rect x="1327.53" y="461.84" width="6.30" height="31.38" fill="#d2426f"/><rect x="1333.70" y="461.84" width="6.30" height="31.38" fill="#ca3e72"/><rect x="1339.88" y="461.84" width="6.30" height="31.38" fill="#ca3e72"/><rect x="1346.06" y="461.84" width="6.30" height="31.38" fill="#fb835f"/><rect x="1352.24" y="461.84" width="6.30" height="31.38" fill="#f56b5c"/><rect x="1358.41" y="461.84" width="6.30" height="31.38" fill="#f8745c"/><rect x="1364.59" y="461.84" width="6.30" height="31.38" fill="#e85362"/><rect x="1370.77" y="461.84" width="6.30" height="31.38" fill="#fd9266"/><rect x="1376.94" y="461.84" width="6.30" height="31.38" fill="#f9795d"/><rect x="1383.12" y="461.84" width="6.30" height="31.38" fill="#fa7d5e"/><rect x="1389.30" y="461.84" width="6.30" height="31.38" fill="#fe9f6d"/><rect x="1395.47" y="461.84" width="6.30" height="31.38" fill="#feae77"/><rect x="1401.65" y="461.84" width="6.30" height="31.38" fill="#fc8961"/><rect x="1407.83" y="461.84" width="6.30" height="31.38" fill="#f9795d"/><rect x="1414.01" y="461.84" width="6.30" height="31.38" fill="#fb835f"/><rect x="1420.18" y="461.84" width="6.30" height="31.38" fill="#fd9266"/><rect x="1426.36" y="461.84" width="6.30" height="31.38" fill="#f56b5c"/><rect x="1432.54" y="461.84" width="6.30" height="31.38" fill="#fc8961"/><rect x="1438.71" y="461.84" width="6.30" height="31.38" fill="#fc8c63"/><rect x="1444.89" y="461.84" width="6.30" height="31.38" fill="#de4968"/><rect x="1451.07" y="461.84" width="6.30" height="31.38" fill="#f56b5c"/><rect x="1457.24" y="461.84" width="6.30" height="31.38" fill="#d2426f"/><rect x="1463.42" y="461.84" width="6.30" height="31.38" fill="#ef5d5e"/><rect x="1469.60" y="461.84" width="6.30" height="31.38" fill="#cf4070"/><rect x="1475.78" y="461.84" width="6.30" height="31.38" fill="#e44f64"/><rect x="1481.95" y="461.84" width="6.30" height="31.38" fill="#942c80"/><rect x="1488.13" y="461.84" width="6.30" height="31.38" fill="#942c80"/><rect x="1494.31" y="461.84" width="6.30" height="31.38" fill="#a1307e"/><rect x="1500.48" y="461.84" width="6.30" height="31.38" fill="#782281"/><rect x="1506.66" y="461.84" width="6.30" height="31.38" fill="#942c80"/><rect x="1512.84" y="461.84" width="6.30" height="31.38" fill="#7c2382"/><rect x="1519.01" y="461.84" width="6.30" height="31.38" fill="#1e1149"/><rect x="944.55" y="493.12" width="6.30" height="31.38" fill="#251255"/><rect x="950.73" y="493.12" width="6.30" height="31.38" fill="#29115a"/><rect x="956.91" y="493.12" width="6.30" height="31.38" fill="#7c2382"/><rect x="963.09" y="493.12" width="6.30" height="31.38" fill="#641a80"/><rect x="969.26" y="493.12" width="6.30" height="31.38" fill="#440f76"/><rect x="975.44" y="493.12" width="6.30" height="31.38" fill="#842681"/><rect x="981.62" y="493.12" width="6.30" height="31.38" fill="#7c2382"/><rect x="987.79" y="493.12" width="6.30" height="31.38" fill="#a1307e"/><rect x="993.97" y="493.12" width="6.30" height="31.38" fill="#f2625d"/><rect x="1000.15" y="493.12" width="6.30" height="31.38" fill="#e44f64"/><rect x="1006.32" y="493.12" width="6.30" height="31.38" fill="#cf4070"/><rect x="1012.50" y="493.12" width="6.30" height="31.38" fill="#f9795d"/><rect x="1018.68" y="493.12" width="6.30" height="31.38" fill="#f56b5c"/><rect x="1024.86" y="493.12" width="6.30" height="31.38" fill="#f56b5c"/><rect x="1031.03" y="493.12" width="6.30" height="31.38" fill="#de4968"/><rect x="1037.21" y="493.12" width="6.30" height="31.38" fill="#de4968"/><rect x="1043.39" y="493.12" width="6.30" height="31.38" fill="#fe9f6d"/><rect x="1049.56" y="493.12" width="6.30" height="31.38" fill="#fe9f6d"/><rect x="1055.74" y="493.12" width="6.30" height="31.38" fill="#feb47b"/><rect x="1061.92" y="493.12" width="6.30" height="31.38" fill="#febd82"/><rect x="1068.09" y="493.12" width="6.30" height="31.38" fill="#ed5a5f"/><rect x="1074.27" y="493.12" width="6.30" height="31.38" fill="#fc8c63"/><rect x="1080.45" y="493.12" width="6.30" height="31.38" fill="#f8745c"/><rect x="1086.62" y="493.12" width="6.30" height="31.38" fill="#f8745c"/><rect x="1092.80" y="493.12" width="6.30" height="31.38" fill="#f2625d"/><rect x="1098.98" y="493.12" width="6.30" height="31.38" fill="#f56b5c"/><rect x="1105.16" y="493.12" width="6.30" height="31.38" fill="#ed5a5f"/><rect x="1111.33" y="493.12" width="6.30" height="31.38" fill="#f2625d"/><rect x="1117.51" y="493.12" width="6.30" height="31.38" fill="#f2625d"/><rect x="1123.69" y="493.12" width="6.30" height="31.38" fill="#ef5d5e"/><rect x="1129.86" y="493.12" width="6.30" height="31.38" fill="#ef5d5e"/><rect x="1136.04" y="493.12" width="6.30" height="31.38" fill="#cf4070"/><rect x="1142.22" y="493.12" width="6.30" height="31.38" fill="#e85362"/><rect x="1148.39" y="493.12" width="6.30" height="31.38" fill="#cf4070"/><rect x="1154.57" y="493.12" width="6.30" height="31.38" fill="#c23b75"/><rect x="1160.75" y="493.12" width="6.30" height="31.38" fill="#e44f64"/><rect x="1166.93" y="493.12" width="6.30" height="31.38" fill="#b73779"/><rect x="1173.10" y="493.12" width="6.30" height="31.38" fill="#641a80"/><rect x="1179.28" y="493.12" width="6.30" height="31.38" fill="#59157e"/><rect x="1185.46" y="493.12" width="6.30" height="31.38" fill="#842681"/><rect x="1191.63" y="493.12" width="6.30" height="31.38" fill="#7c2382"/><rect x="1197.81" y="493.12" width="6.30" height="31.38" fill="#7c2382"/><rect x="1203.99" y="493.12" width="6.30" height="31.38" fill="#782281"/><rect x="1210.16" y="493.12" width="6.30" height="31.38" fill="#3b0f70"/><rect x="1265.76" y="493.12" width="6.30" height="31.38" fill="#000004"/><rect x="1271.93" y="493.12" width="6.30" height="31.38" fill="#54137d"/><rect x="1278.11" y="493.12" width="6.30" height="31.38" fill="#1a1042"/><rect x="1284.29" y="493.12" width="6.30" height="31.38" fill="#641a80"/><rect x="1290.47" y="493.12" width="6.30" height="31.38" fill="#3b0f70"/><rect x="1296.64" y="493.12" width="6.30" height="31.38" fill="#641a80"/><rect x="1302.82" y="493.12" width="6.30" height="31.38" fill="#842681"/><rect x="1309.00" y="493.12" width="6.30" height="31.38" fill="#d2426f"/><rect x="1315.17" y="493.12" width="6.30" height="31.38" fill="#ca3e72"/><rect x="1321.35" y="493.12" width="6.30" height="31.38" fill="#d6456c"/><rect x="1327.53" y="493.12" width="6.30" height="31.38" fill="#ed5a5f"/><rect x="1333.70" y="493.12" width="6.30" height="31.38" fill="#e44f64"/><rect x="1339.88" y="493.12" width="6.30" height="31.38" fill="#cf4070"/><rect x="1346.06" y="493.12" width="6.30" height="31.38" fill="#fe9f6d"/><rect x="1352.24" y="493.12" width="6.30" height="31.38" fill="#f9795d"/><rect x="1358.41" y="493.12" width="6.30" height="31.38" fill="#f56b5c"/><rect x="1364.59" y="493.12" width="6.30" height="31.38" fill="#f56b5c"/><rect x="1370.77" y="493.12" width="6.30" height="31.38" fill="#fb835f"/><rect x="1376.94" y="493.12" width="6.30" height="31.38" fill="#f56b5c"/><rect x="1383.12" y="493.12" width="6.30" height="31.38" fill="#fb835f"/><rect x="1389.30" y="493.12" width="6.30" height="31.38" fill="#fd9668"/><rect x="1395.47" y="493.12" width="6.30" height="31.38" fill="#feb47b"/><rect x="1401.65" y="493.12" width="6.30" height="31.38" fill="#fc8961"/><rect x="1407.83" y="493.12" width="6.30" height="31.38" fill="#f56b5c"/><rect x="1414.01" y="493.12" width="6.30" height="31.38" fill="#fb835f"/><rect x="1420.18" y="493.12" width="6.30" height="31.38" fill="#fd9266"/><rect x="1426.36" y="493.12" width="6.30" height="31.38" fill="#f56b5c"/><rect x="1432.54" y="493.12" width="6.30" height="31.38" fill="#fd9668"/><rect x="1438.71" y="493.12" width="6.30" height="31.38" fill="#fb835f"/><rect x="1444.89" y="493.12" width="6.30" height="31.38" fill="#e44f64"/><rect x="1451.07" y="493.12" width="6.30" height="31.38" fill="#ed5a5f"/><rect x="1457.24" y="493.12" width="6.30" height="31.38" fill="#e44f64"/><rect x="1463.42" y="493.12" width="6.30" height="31.38" fill="#e85362"/><rect x="1469.60" y="493.12" width="6.30" height="31.38" fill="#cf4070"/><rect x="1475.78" y="493.12" width="6.30" height="31.38" fill="#e44f64"/><rect x="1481.95" y="493.12" width="6.30" height="31.38" fill="#a1307e"/><rect x="1488.13" y="493.12" width="6.30" height="31.38" fill="#ca3e72"/><rect x="1494.31" y="493.12" width="6.30" height="31.38" fill="#c23b75"/><rect x="1500.48" y="493.12" width="6.30" height="31.38" fill="#782281"/><rect x="1506.66" y="493.12" width="6.30" height="31.38" fill="#b73779"/><rect x="1512.84" y="493.12" width="6.30" height="31.38" fill="#7c2382"/><rect x="1519.01" y="493.12" width="6.30" height="31.38" fill="#1a1042"/><rect x="1525.19" y="493.12" width="6.30" height="31.38" fill="#3b0f70"/><rect x="1531.37" y="493.12" width="6.30" height="31.38" fill="#090720"/><rect x="932.20" y="524.40" width="6.30" height="31.38" fill="#251255"/><rect x="938.38" y="524.40" width="6.30" height="31.38" fill="#251255"/><rect x="944.55" y="524.40" width="6.30" height="31.38" fill="#641a80"/><rect x="950.73" y="524.40" width="6.30" height="31.38" fill="#3b0f70"/><rect x="956.91" y="524.40" width="6.30" height="31.38" fill="#641a80"/><rect x="963.09" y="524.40" width="6.30" height="31.38" fill="#782281"/><rect x="969.26" y="524.40" width="6.30" height="31.38" fill="#641a80"/><rect x="975.44" y="524.40" width="6.30" height="31.38" fill="#a1307e"/><rect x="981.62" y="524.40" width="6.30" height="31.38" fill="#942c80"/><rect x="987.79" y="524.40" width="6.30" height="31.38" fill="#e9789c"/><rect x="993.97" y="524.40" width="6.30" height="31.38" fill="#f56b5c"/><rect x="1000.15" y="524.40" width="6.30" height="31.38" fill="#f2625d"/><rect x="1006.32" y="524.40" width="6.30" height="31.38" fill="#e44f64"/><rect x="1012.50" y="524.40" width="6.30" height="31.38" fill="#de4968"/><rect x="1018.68" y="524.40" width="6.30" height="31.38" fill="#e44f64"/><rect x="1024.86" y="524.40" width="6.30" height="31.38" fill="#ef5d5e"/><rect x="1031.03" y="524.40" width="6.30" height="31.38" fill="#db476a"/><rect x="1037.21" y="524.40" width="6.30" height="31.38" fill="#e44f64"/><rect x="1043.39" y="524.40" width="6.30" height="31.38" fill="#f9795d"/><rect x="1049.56" y="524.40" width="6.30" height="31.38" fill="#fe9f6d"/><rect x="1055.74" y="524.40" width="6.30" height="31.38" fill="#feb77e"/><rect x="1061.92" y="524.40" width="6.30" height="31.38" fill="#febd82"/><rect x="1068.09" y="524.40" width="6.30" height="31.38" fill="#ed5a5f"/><rect x="1074.27" y="524.40" width="6.30" height="31.38" fill="#fc8961"/><rect x="1080.45" y="524.40" width="6.30" height="31.38" fill="#f56b5c"/><rect x="1086.62" y="524.40" width="6.30" height="31.38" fill="#f2625d"/><rect x="1092.80" y="524.40" width="6.30" height="31.38" fill="#f2625d"/><rect x="1098.98" y="524.40" width="6.30" height="31.38" fill="#ef5d5e"/><rect x="1105.16" y="524.40" width="6.30" height="31.38" fill="#ed5a5f"/><rect x="1111.33" y="524.40" width="6.30" height="31.38" fill="#d2426f"/><rect x="1117.51" y="524.40" width="6.30" height="31.38" fill="#de4968"/><rect x="1123.69" y="524.40" width="6.30" height="31.38" fill="#de4968"/><rect x="1129.86" y="524.40" width="6.30" height="31.38" fill="#d2426f"/><rect x="1136.04" y="524.40" width="6.30" height="31.38" fill="#de4968"/><rect x="1142.22" y="524.40" width="6.30" height="31.38" fill="#ed5a5f"/><rect x="1148.39" y="524.40" width="6.30" height="31.38" fill="#cf4070"/><rect x="1154.57" y="524.40" width="6.30" height="31.38" fill="#c23b75"/><rect x="1160.75" y="524.40" width="6.30" height="31.38" fill="#c23b75"/><rect x="1166.93" y="524.40" width="6.30" height="31.38" fill="#b73779"/><rect x="1173.10" y="524.40" width="6.30" height="31.38" fill="#7c2382"/><rect x="1179.28" y="524.40" width="6.30" height="31.38" fill="#942c80"/><rect x="1185.46" y="524.40" width="6.30" height="31.38" fill="#942c80"/><rect x="1191.63" y="524.40" width="6.30" height="31.38" fill="#842681"/><rect x="1197.81" y="524.40" width="6.30" height="31.38" fill="#7c2382"/><rect x="1203.99" y="524.40" width="6.30" height="31.38" fill="#59157e"/><rect x="1210.16" y="524.40" width="6.30" height="31.38" fill="#140e36"/><rect x="1216.34" y="524.40" width="6.30" height="31.38" fill="#3b0f70"/><rect x="1222.52" y="524.40" width="6.30" height="31.38" fill="#140e36"/><rect x="1228.70" y="524.40" width="6.30" height="31.38" fill="#29115a"/><rect x="1234.87" y="524.40" width="6.30" height="31.38" fill="#050416"/><rect x="1241.05" y="524.40" width="6.30" height="31.38" fill="#050416"/><rect x="1247.23" y="524.40" width="6.30" height="31.38" fill="#1e1149"/><rect x="1253.40" y="524.40" width="6.30" height="31.38" fill="#36106b"/><rect x="1259.58" y="524.40" width="6.30" height="31.38" fill="#21114e"/><rect x="1265.76" y="524.40" width="6.30" height="31.38" fill="#3b0f70"/><rect x="1271.93" y="524.40" width="6.30" height="31.38" fill="#54137d"/><rect x="1278.11" y="524.40" width="6.30" height="31.38" fill="#1e1149"/><rect x="1284.29" y="524.40" width="6.30" height="31.38" fill="#59157e"/><rect x="1290.47" y="524.40" width="6.30" height="31.38" fill="#36106b"/><rect x="1296.64" y="524.40" width="6.30" height="31.38" fill="#782281"/><rect x="1302.82" y="524.40" width="6.30" height="31.38" fill="#c23b75"/><rect x="1309.00" y="524.40" width="6.30" height="31.38" fill="#cf4070"/><rect x="1315.17" y="524.40" width="6.30" height="31.38" fill="#d2426f"/><rect x="1321.35" y="524.40" width="6.30" height="31.38" fill="#992d80"/><rect x="1327.53" y="524.40" width="6.30" height="31.38" fill="#e44f64"/><rect x="1333.70" y="524.40" width="6.30" height="31.38" fill="#d2426f"/><rect x="1339.88" y="524.40" width="6.30" height="31.38" fill="#de4968"/><rect x="1346.06" y="524.40" width="6.30" height="31.38" fill="#f9795d"/><rect x="1352.24" y="524.40" width="6.30" height="31.38" fill="#e44f64"/><rect x="1358.41" y="524.40" width="6.30" height="31.38" fill="#e85362"/><rect x="1364.59" y="524.40" width="6.30" height="31.38" fill="#de4968"/><rect x="1370.77" y="524.40" width="6.30" height="31.38" fill="#f4675c"/><rect x="1376.94" y="524.40" width="6.30" height="31.38" fill="#f2625d"/><rect x="1383.12" y="524.40" width="6.30" height="31.38" fill="#f2625d"/><rect x="1389.30" y="524.40" width="6.30" height="31.38" fill="#f4675c"/><rect x="1395.47" y="524.40" width="6.30" height="31.38" fill="#fb835f"/><rect x="1401.65" y="524.40" width="6.30" height="31.38" fill="#f9795d"/><rect x="1407.83" y="524.40" width="6.30" height="31.38" fill="#f8745c"/><rect x="1414.01" y="524.40" width="6.30" height="31.38" fill="#e85362"/><rect x="1420.18" y="524.40" width="6.30" height="31.38" fill="#f4675c"/><rect x="1426.36" y="524.40" width="6.30" height="31.38" fill="#ef5d5e"/><rect x="1432.54" y="524.40" width="6.30" height="31.38" fill="#fb835f"/><rect x="1438.71" y="524.40" width="6.30" height="31.38" fill="#f8745c"/><rect x="1444.89" y="524.40" width="6.30" height="31.38" fill="#d2426f"/><rect x="1451.07" y="524.40" width="6.30" height="31.38" fill="#e44f64"/><rect x="1457.24" y="524.40" width="6.30" height="31.38" fill="#d6456c"/><rect x="1463.42" y="524.40" width="6.30" height="31.38" fill="#de4968"/><rect x="1469.60" y="524.40" width="6.30" height="31.38" fill="#cf4070"/><rect x="1475.78" y="524.40" width="6.30" height="31.38" fill="#de4968"/><rect x="1481.95" y="524.40" width="6.30" height="31.38" fill="#ca3e72"/><rect x="1488.13" y="524.40" width="6.30" height="31.38" fill="#ca3e72"/><rect x="1494.31" y="524.40" width="6.30" height="31.38" fill="#ca3e72"/><rect x="1500.48" y="524.40" width="6.30" height="31.38" fill="#a5317e"/><rect x="1506.66" y="524.40" width="6.30" height="31.38" fill="#8c2981"/><rect x="1512.84" y="524.40" width="6.30" height="31.38" fill="#7c2382"/><rect x="1519.01" y="524.40" width="6.30" height="31.38" fill="#1e1149"/><rect x="1525.19" y="524.40" width="6.30" height="31.38" fill="#3b0f70"/><rect x="1531.37" y="524.40" width="6.30" height="31.38" fill="#29115a"/><rect x="1537.55" y="524.40" width="6.30" height="31.38" fill="#471078"/><rect x="1543.72" y="524.40" width="6.30" height="31.38" fill="#3b0f70"/><rect x="1549.90" y="524.40" width="6.30" height="31.38" fill="#1e1149"/><rect x="1556.08" y="524.40" width="6.30" height="31.38" fill="#140e36"/><rect x="1562.25" y="524.40" width="6.30" height="31.38" fill="#180f3d"/><rect x="1568.43" y="524.40" width="6.30" height="31.38" fill="#02020b"/><rect x="932.20" y="555.68" width="6.30" height="31.38" fill="#3b0f70"/><rect x="938.38" y="555.68" width="6.30" height="31.38" fill="#3b0f70"/><rect x="944.55" y="555.68" width="6.30" height="31.38" fill="#3b0f70"/><rect x="950.73" y="555.68" width="6.30" height="31.38" fill="#59157e"/><rect x="956.91" y="555.68" width="6.30" height="31.38" fill="#842681"/><rect x="963.09" y="555.68" width="6.30" height="31.38" fill="#59157e"/><rect x="969.26" y="555.68" width="6.30" height="31.38" fill="#942c80"/><rect x="975.44" y="555.68" width="6.30" height="31.38" fill="#c23b75"/><rect x="981.62" y="555.68" width="6.30" height="31.38" fill="#b73779"/><rect x="987.79" y="555.68" width="6.30" height="31.38" fill="#ed5a5f"/><rect x="993.97" y="555.68" width="6.30" height="31.38" fill="#f2625d"/><rect x="1000.15" y="555.68" width="6.30" height="31.38" fill="#e85362"/><rect x="1006.32" y="555.68" width="6.30" height="31.38" fill="#de4968"/><rect x="1012.50" y="555.68" width="6.30" height="31.38" fill="#ca3e72"/><rect x="1018.68" y="555.68" width="6.30" height="31.38" fill="#ca3e72"/><rect x="1024.86" y="555.68" width="6.30" height="31.38" fill="#ca3e72"/><rect x="1031.03" y="555.68" width="6.30" height="31.38" fill="#de4968"/><rect x="1037.21" y="555.68" width="6.30" height="31.38" fill="#de4968"/><rect x="1043.39" y="555.68" width="6.30" height="31.38" fill="#f8745c"/><rect x="1049.56" y="555.68" width="6.30" height="31.38" fill="#f8745c"/><rect x="1055.74" y="555.68" width="6.30" height="31.38" fill="#fe9f6d"/><rect x="1061.92" y="555.68" width="6.30" height="31.38" fill="#fec185"/><rect x="1068.09" y="555.68" width="6.30" height="31.38" fill="#d2426f"/><rect x="1074.27" y="555.68" width="6.30" height="31.38" fill="#ed5a5f"/><rect x="1080.45" y="555.68" width="6.30" height="31.38" fill="#ed5a5f"/><rect x="1086.62" y="555.68" width="6.30" height="31.38" fill="#d2426f"/><rect x="1092.80" y="555.68" width="6.30" height="31.38" fill="#ed5a5f"/><rect x="1098.98" y="555.68" width="6.30" height="31.38" fill="#de4968"/><rect x="1105.16" y="555.68" width="6.30" height="31.38" fill="#d2426f"/><rect x="1111.33" y="555.68" width="6.30" height="31.38" fill="#cf4070"/><rect x="1117.51" y="555.68" width="6.30" height="31.38" fill="#cf4070"/><rect x="1123.69" y="555.68" width="6.30" height="31.38" fill="#d2426f"/><rect x="1129.86" y="555.68" width="6.30" height="31.38" fill="#cf4070"/><rect x="1136.04" y="555.68" width="6.30" height="31.38" fill="#de4968"/><rect x="1142.22" y="555.68" width="6.30" height="31.38" fill="#d2426f"/><rect x="1148.39" y="555.68" width="6.30" height="31.38" fill="#cf4070"/><rect x="1154.57" y="555.68" width="6.30" height="31.38" fill="#e44f64"/><rect x="1160.75" y="555.68" width="6.30" height="31.38" fill="#cf4070"/><rect x="1166.93" y="555.68" width="6.30" height="31.38" fill="#c23b75"/><rect x="1173.10" y="555.68" width="6.30" height="31.38" fill="#c23b75"/><rect x="1179.28" y="555.68" width="6.30" height="31.38" fill="#b73779"/><rect x="1185.46" y="555.68" width="6.30" height="31.38" fill="#b73779"/><rect x="1191.63" y="555.68" width="6.30" height="31.38" fill="#7c2382"/><rect x="1197.81" y="555.68" width="6.30" height="31.38" fill="#7c2382"/><rect x="1203.99" y="555.68" width="6.30" height="31.38" fill="#59157e"/><rect x="1210.16" y="555.68" width="6.30" height="31.38" fill="#1a1042"/><rect x="1216.34" y="555.68" width="6.30" height="31.38" fill="#3b0f70"/><rect x="1222.52" y="555.68" width="6.30" height="31.38" fill="#140e36"/><rect x="1228.70" y="555.68" width="6.30" height="31.38" fill="#29115a"/><rect x="1234.87" y="555.68" width="6.30" height="31.38" fill="#050416"/><rect x="1241.05" y="555.68" width="6.30" height="31.38" fill="#120d31"/><rect x="1247.23" y="555.68" width="6.30" height="31.38" fill="#180f3d"/><rect x="1253.40" y="555.68" width="6.30" height="31.38" fill="#29115a"/><rect x="1259.58" y="555.68" width="6.30" height="31.38" fill="#1e1149"/><rect x="1265.76" y="555.68" width="6.30" height="31.38" fill="#36106b"/><rect x="1271.93" y="555.68" width="6.30" height="31.38" fill="#471078"/><rect x="1278.11" y="555.68" width="6.30" height="31.38" fill="#471078"/><rect x="1284.29" y="555.68" width="6.30" height="31.38" fill="#842681"/><rect x="1290.47" y="555.68" width="6.30" height="31.38" fill="#681c81"/><rect x="1296.64" y="555.68" width="6.30" height="31.38" fill="#a5317e"/><rect x="1302.82" y="555.68" width="6.30" height="31.38" fill="#a5317e"/><rect x="1309.00" y="555.68" width="6.30" height="31.38" fill="#b73779"/><rect x="1315.17" y="555.68" width="6.30" height="31.38" fill="#b73779"/><rect x="1321.35" y="555.68" width="6.30" height="31.38" fill="#f7705c"/><rect x="1327.53" y="555.68" width="6.30" height="31.38" fill="#de4968"/><rect x="1333.70" y="555.68" width="6.30" height="31.38" fill="#b73779"/><rect x="1339.88" y="555.68" width="6.30" height="31.38" fill="#d2426f"/><rect x="1346.06" y="555.68" width="6.30" height="31.38" fill="#ca3e72"/><rect x="1352.24" y="555.68" width="6.30" height="31.38" fill="#de4968"/><rect x="1358.41" y="555.68" width="6.30" height="31.38" fill="#de4968"/><rect x="1364.59" y="555.68" width="6.30" height="31.38" fill="#db476a"/><rect x="1370.77" y="555.68" width="6.30" height="31.38" fill="#e44f64"/><rect x="1376.94" y="555.68" width="6.30" height="31.38" fill="#de4968"/><rect x="1383.12" y="555.68" width="6.30" height="31.38" fill="#de4968"/><rect x="1389.30" y="555.68" width="6.30" height="31.38" fill="#e85362"/><rect x="1395.47" y="555.68" width="6.30" height="31.38" fill="#f4675c"/><rect x="1401.65" y="555.68" width="6.30" height="31.38" fill="#ed5a5f"/><rect x="1407.83" y="555.68" width="6.30" height="31.38" fill="#e44f64"/><rect x="1414.01" y="555.68" width="6.30" height="31.38" fill="#d2426f"/><rect x="1420.18" y="555.68" width="6.30" height="31.38" fill="#f4675c"/><rect x="1426.36" y="555.68" width="6.30" height="31.38" fill="#e85362"/><rect x="1432.54" y="555.68" width="6.30" height="31.38" fill="#e44f64"/><rect x="1438.71" y="555.68" width="6.30" height="31.38" fill="#d6456c"/><rect x="1444.89" y="555.68" width="6.30" height="31.38" fill="#cf4070"/><rect x="1451.07" y="555.68" width="6.30" height="31.38" fill="#d2426f"/><rect x="1457.24" y="555.68" width="6.30" height="31.38" fill="#d2426f"/><rect x="1463.42" y="555.68" width="6.30" height="31.38" fill="#cf4070"/><rect x="1469.60" y="555.68" width="6.30" height="31.38" fill="#de4968"/><rect x="1475.78" y="555.68" width="6.30" height="31.38" fill="#c23b75"/><rect x="1481.95" y="555.68" width="6.30" height="31.38" fill="#cf4070"/><rect x="1488.13" y="555.68" width="6.30" height="31.38" fill="#c23b75"/><rect x="1494.31" y="555.68" width="6.30" height="31.38" fill="#c23b75"/><rect x="1500.48" y="555.68" width="6.30" height="31.38" fill="#b73779"/><rect x="1506.66" y="555.68" width="6.30" height="31.38" fill="#7c2382"/><rect x="1512.84" y="555.68" width="6.30" height="31.38" fill="#681c81"/><rect x="1519.01" y="555.68" width="6.30" height="31.38" fill="#59157e"/><rect x="1525.19" y="555.68" width="6.30" height="31.38" fill="#59157e"/><rect x="1531.37" y="555.68" width="6.30" height="31.38" fill="#3b0f70"/><rect x="1537.55" y="555.68" width="6.30" height="31.38" fill="#21114e"/><rect x="1543.72" y="555.68" width="6.30" height="31.38" fill="#140e36"/><rect x="1549.90" y="555.68" width="6.30" height="31.38" fill="#180f3d"/><rect x="1556.08" y="555.68" width="6.30" height="31.38" fill="#120d31"/><rect x="1562.25" y="555.68" width="6.30" height="31.38" fill="#0b0924"/><rect x="1568.43" y="555.68" width="6.30" height="31.38" fill="#1e1149"/><rect x="932.20" y="586.96" width="6.30" height="31.38" fill="#3b0f70"/><rect x="938.38" y="586.96" width="6.30" height="31.38" fill="#59157e"/><rect x="944.55" y="586.96" width="6.30" height="31.38" fill="#59157e"/><rect x="950.73" y="586.96" width="6.30" height="31.38" fill="#942c80"/><rect x="956.91" y="586.96" width="6.30" height="31.38" fill="#a1307e"/><rect x="963.09" y="586.96" width="6.30" height="31.38" fill="#c23b75"/><rect x="969.26" y="586.96" width="6.30" height="31.38" fill="#b73779"/><rect x="975.44" y="586.96" width="6.30" height="31.38" fill="#f8745c"/><rect x="981.62" y="586.96" width="6.30" height="31.38" fill="#ed5a5f"/><rect x="987.79" y="586.96" width="6.30" height="31.38" fill="#c23b75"/><rect x="993.97" y="586.96" width="6.30" height="31.38" fill="#de4968"/><rect x="1000.15" y="586.96" width="6.30" height="31.38" fill="#fd9b6b"/><rect x="1006.32" y="586.96" width="6.30" height="31.38" fill="#fec185"/><rect x="1012.50" y="586.96" width="6.30" height="31.38" fill="#feb47b"/><rect x="1018.68" y="586.96" width="6.30" height="31.38" fill="#fed89a"/><rect x="1024.86" y="586.96" width="6.30" height="31.38" fill="#fec68a"/><rect x="1031.03" y="586.96" width="6.30" height="31.38" fill="#fddea0"/><rect x="1037.21" y="586.96" width="6.30" height="31.38" fill="#fcfdbf"/><rect x="1043.39" y="586.96" width="6.30" height="31.38" fill="#f9795d"/><rect x="1049.56" y="586.96" width="6.30" height="31.38" fill="#f56b5c"/><rect x="1055.74" y="586.96" width="6.30" height="31.38" fill="#f56b5c"/><rect x="1061.92" y="586.96" width="6.30" height="31.38" fill="#f2625d"/><rect x="1068.09" y="586.96" width="6.30" height="31.38" fill="#feae77"/><rect x="1074.27" y="586.96" width="6.30" height="31.38" fill="#f9795d"/><rect x="1080.45" y="586.96" width="6.30" height="31.38" fill="#fa7d5e"/><rect x="1086.62" y="586.96" width="6.30" height="31.38" fill="#feb47b"/><rect x="1092.80" y="586.96" width="6.30" height="31.38" fill="#feae77"/><rect x="1098.98" y="586.96" width="6.30" height="31.38" fill="#febd82"/><rect x="1105.16" y="586.96" width="6.30" height="31.38" fill="#feb77e"/><rect x="1111.33" y="586.96" width="6.30" height="31.38" fill="#feae77"/><rect x="1117.51" y="586.96" width="6.30" height="31.38" fill="#fea973"/><rect x="1123.69" y="586.96" width="6.30" height="31.38" fill="#feb47b"/><rect x="1129.86" y="586.96" width="6.30" height="31.38" fill="#fed395"/><rect x="1136.04" y="586.96" width="6.30" height="31.38" fill="#fddea0"/><rect x="1142.22" y="586.96" width="6.30" height="31.38" fill="#fec68a"/><rect x="1148.39" y="586.96" width="6.30" height="31.38" fill="#fde7a9"/><rect x="1154.57" y="586.96" width="6.30" height="31.38" fill="#fde2a3"/><rect x="1160.75" y="586.96" width="6.30" height="31.38" fill="#fed89a"/><rect x="1166.93" y="586.96" width="6.30" height="31.38" fill="#fed395"/><rect x="1173.10" y="586.96" width="6.30" height="31.38" fill="#fec68a"/><rect x="1179.28" y="586.96" width="6.30" height="31.38" fill="#fddea0"/><rect x="1185.46" y="586.96" width="6.30" height="31.38" fill="#fe9f6d"/><rect x="1191.63" y="586.96" width="6.30" height="31.38" fill="#e44f64"/><rect x="1197.81" y="586.96" width="6.30" height="31.38" fill="#c23b75"/><rect x="1203.99" y="586.96" width="6.30" height="31.38" fill="#b73779"/><rect x="1210.16" y="586.96" width="6.30" height="31.38" fill="#471078"/><rect x="1216.34" y="586.96" width="6.30" height="31.38" fill="#59157e"/><rect x="1222.52" y="586.96" width="6.30" height="31.38" fill="#140e36"/><rect x="1228.70" y="586.96" width="6.30" height="31.38" fill="#331067"/><rect x="1234.87" y="586.96" width="6.30" height="31.38" fill="#120d31"/><rect x="1241.05" y="586.96" width="6.30" height="31.38" fill="#1a1042"/><rect x="1247.23" y="586.96" width="6.30" height="31.38" fill="#1e1149"/><rect x="1253.40" y="586.96" width="6.30" height="31.38" fill="#21114e"/><rect x="1259.58" y="586.96" width="6.30" height="31.38" fill="#29115a"/><rect x="1265.76" y="586.96" width="6.30" height="31.38" fill="#471078"/><rect x="1271.93" y="586.96" width="6.30" height="31.38" fill="#842681"/><rect x="1278.11" y="586.96" width="6.30" height="31.38" fill="#842681"/><rect x="1284.29" y="586.96" width="6.30" height="31.38" fill="#de4968"/><rect x="1290.47" y="586.96" width="6.30" height="31.38" fill="#942c80"/><rect x="1296.64" y="586.96" width="6.30" height="31.38" fill="#cf4070"/><rect x="1302.82" y="586.96" width="6.30" height="31.38" fill="#ca3e72"/><rect x="1309.00" y="586.96" width="6.30" height="31.38" fill="#e44f64"/><rect x="1315.17" y="586.96" width="6.30" height="31.38" fill="#b73779"/><rect x="1321.35" y="586.96" width="6.30" height="31.38" fill="#942c80"/><rect x="1327.53" y="586.96" width="6.30" height="31.38" fill="#fc8961"/><rect x="1333.70" y="586.96" width="6.30" height="31.38" fill="#fea571"/><rect x="1339.88" y="586.96" width="6.30" height="31.38" fill="#fcf0b2"/><rect x="1346.06" y="586.96" width="6.30" height="31.38" fill="#fd9b6b"/><rect x="1352.24" y="586.96" width="6.30" height="31.38" fill="#febd82"/><rect x="1358.41" y="586.96" width="6.30" height="31.38" fill="#febd82"/><rect x="1364.59" y="586.96" width="6.30" height="31.38" fill="#fd9b6b"/><rect x="1370.77" y="586.96" width="6.30" height="31.38" fill="#fea571"/><rect x="1376.94" y="586.96" width="6.30" height="31.38" fill="#fe9f6d"/><rect x="1383.12" y="586.96" width="6.30" height="31.38" fill="#fea571"/><rect x="1389.30" y="586.96" width="6.30" height="31.38" fill="#fd9668"/><rect x="1395.47" y="586.96" width="6.30" height="31.38" fill="#fc8961"/><rect x="1401.65" y="586.96" width="6.30" height="31.38" fill="#fea571"/><rect x="1407.83" y="586.96" width="6.30" height="31.38" fill="#fec68a"/><rect x="1414.01" y="586.96" width="6.30" height="31.38" fill="#fed395"/><rect x="1420.18" y="586.96" width="6.30" height="31.38" fill="#feb47b"/><rect x="1426.36" y="586.96" width="6.30" height="31.38" fill="#fea973"/><rect x="1432.54" y="586.96" width="6.30" height="31.38" fill="#fea571"/><rect x="1438.71" y="586.96" width="6.30" height="31.38" fill="#fec68a"/><rect x="1444.89" y="586.96" width="6.30" height="31.38" fill="#fed395"/><rect x="1451.07" y="586.96" width="6.30" height="31.38" fill="#fde2a3"/><rect x="1457.24" y="586.96" width="6.30" height="31.38" fill="#fddea0"/><rect x="1463.42" y="586.96" width="6.30" height="31.38" fill="#fea571"/><rect x="1469.60" y="586.96" width="6.30" height="31.38" fill="#fcfdbf"/><rect x="1475.78" y="586.96" width="6.30" height="31.38" fill="#feb47b"/><rect x="1481.95" y="586.96" width="6.30" height="31.38" fill="#fec185"/><rect x="1488.13" y="586.96" width="6.30" height="31.38" fill="#febd82"/><rect x="1494.31" y="586.96" width="6.30" height="31.38" fill="#fe9f6d"/><rect x="1500.48" y="586.96" width="6.30" height="31.38" fill="#fe9f6d"/><rect x="1506.66" y="586.96" width="6.30" height="31.38" fill="#fc8c63"/><rect x="1512.84" y="586.96" width="6.30" height="31.38" fill="#f2625d"/><rect x="1519.01" y="586.96" width="6.30" height="31.38" fill="#bf3a77"/><rect x="1525.19" y="586.96" width="6.30" height="31.38" fill="#a5317e"/><rect x="1531.37" y="586.96" width="6.30" height="31.38" fill="#641a80"/><rect x="1537.55" y="586.96" width="6.30" height="31.38" fill="#2d1161"/><rect x="1543.72" y="586.96" width="6.30" height="31.38" fill="#29115a"/><rect x="1549.90" y="586.96" width="6.30" height="31.38" fill="#1e1149"/><rect x="1556.08" y="586.96" width="6.30" height="31.38" fill="#140e36"/><rect x="1562.25" y="586.96" width="6.30" height="31.38" fill="#180f3d"/><rect x="1568.43" y="586.96" width="6.30" height="31.38" fill="#21114e"/></g><path d="M973.7 368.0 V618.24" stroke="#85888d" stroke-width="1" stroke-dasharray="2 2.2" opacity="0.45"/><path d="M935.3 445.4 H1581.0" stroke="#85888d" stroke-width="1" stroke-dasharray="2 2.2" opacity="0.45"/>
<defs><linearGradient id="mg" x1="0" y1="0" x2="1" y2="0"><stop offset="0.00" stop-color="#000004"/><stop offset="0.05" stop-color="#06051a"/><stop offset="0.10" stop-color="#140e36"/><stop offset="0.15" stop-color="#251255"/><stop offset="0.20" stop-color="#3b0f70"/><stop offset="0.25" stop-color="#51127c"/><stop offset="0.30" stop-color="#641a80"/><stop offset="0.35" stop-color="#782281"/><stop offset="0.40" stop-color="#8c2981"/><stop offset="0.45" stop-color="#a1307e"/><stop offset="0.50" stop-color="#b73779"/><stop offset="0.55" stop-color="#ca3e72"/><stop offset="0.60" stop-color="#de4968"/><stop offset="0.65" stop-color="#ed5a5f"/><stop offset="0.70" stop-color="#f7705c"/><stop offset="0.75" stop-color="#fc8961"/><stop offset="0.80" stop-color="#fe9f6d"/><stop offset="0.85" stop-color="#feb77e"/><stop offset="0.90" stop-color="#fecf92"/><stop offset="0.95" stop-color="#fde7a9"/><stop offset="1.00" stop-color="#fcfdbf"/></linearGradient></defs><rect x="913" y="652.3" width="316" height="9.7" rx="4.85" fill="url(#mg)"/>
<circle cx="1579.1" cy="326.5" r="1.3" fill="#24292e"/><circle cx="1579.1" cy="330.8" r="1.3" fill="#24292e"/><circle cx="1579.1" cy="335.05" r="1.3" fill="#24292e"/></svg>
<span class="t" style="left:26.90px;top:28.00px;font-size:12.8px;color:#24292e;letter-spacing:0.519px;-webkit-text-stroke:0.25px #24292e;">aggregation Period</span>
<span class="t" style="left:161.90px;top:26.00px;font-size:15px;color:#24292e;letter-spacing:0.519px;">Weekly</span>
<span class="t" style="left:267.80px;top:28.00px;font-size:12.8px;color:#24292e;letter-spacing:0.317px;-webkit-text-stroke:0.25px #24292e;">Time Range</span>
<span class="t" style="left:358.00px;top:26.00px;font-size:15px;color:#24292e;letter-spacing:0.431px;">max</span>
<span class="t" style="left:1010.10px;top:26.00px;font-size:15px;color:#24292e;letter-spacing:0.746px;-webkit-text-stroke:0.2px #24292e;">2023-01-01 00:00:00 to 2025-01-02 01:00:00</span>
<span class="t" style="left:1500.20px;top:26.00px;font-size:15px;color:#24292e;letter-spacing:0.346px;-webkit-text-stroke:0.2px #24292e;">Refresh</span>
<span class="t" style="left:30.20px;top:83.00px;font-size:15px;color:#24292e;letter-spacing:0.524px;-webkit-text-stroke:0.2px #24292e;">Dashboards</span>
<span class="t" style="left:559.20px;top:83.00px;font-size:15px;color:#24292e;letter-spacing:0.484px;-webkit-text-stroke:0.2px #24292e;">Current Period Shading Losses</span>
<span class="t" style="left:1089.20px;top:83.00px;font-size:15px;color:#24292e;letter-spacing:0.571px;-webkit-text-stroke:0.2px #24292e;">Current Period Irradiance Performance</span>
<span class="t" style="left:559.20px;top:243.00px;font-size:15px;color:#24292e;letter-spacing:0.492px;-webkit-text-stroke:0.2px #24292e;">Period Variable Shading</span>
<span class="t" style="left:824.20px;top:243.00px;font-size:15px;color:#24292e;letter-spacing:0.393px;-webkit-text-stroke:0.2px #24292e;">Period Shading Revenu...</span>
<span class="t" style="left:1089.20px;top:243.00px;font-size:15px;color:#24292e;letter-spacing:0.384px;-webkit-text-stroke:0.2px #24292e;">Total Shading Revenue ...</span>
<span class="t" style="left:1354.20px;top:243.00px;font-size:15px;color:#24292e;letter-spacing:0.354px;-webkit-text-stroke:0.2px #24292e;">Daily Mean Daytime POA</span>
<span class="t" style="left:30.20px;top:323.00px;font-size:15px;color:#24292e;letter-spacing:0.505px;-webkit-text-stroke:0.2px #24292e;">Shading Losses (kWh)</span>
<span class="t" style="left:30.20px;top:523.00px;font-size:15px;color:#24292e;letter-spacing:0.638px;-webkit-text-stroke:0.2px #24292e;">Irradiance Comparison</span>
<span class="t" style="left:891.20px;top:323.00px;font-size:15px;color:#24292e;letter-spacing:0.483px;-webkit-text-stroke:0.2px #24292e;">Elevation Performance Heatmap</span>
<span class="t" style="left:42.90px;top:151.00px;font-size:15px;color:#24292e;letter-spacing:0.441px;">Newquay Solar Performance Hub</span>
<span class="t" style="left:42.90px;top:211.00px;font-size:15px;color:#24292e;letter-spacing:0.415px;">Operational Loss Analysis (Soiling &amp; Clipping)</span>
<span class="t" style="left:42.90px;top:270.00px;font-size:15px;color:#24292e;letter-spacing:0.373px;">Reliability &amp; Degradation Dashboard</span>
<span class="t" style="left:642.65px;top:278.00px;font-size:17.5px;color:#24292e;letter-spacing:0.650px;-webkit-text-stroke:0.2px #24292e;">182</span>
<span class="t" style="left:673.15px;top:279.00px;font-size:15px;color:#24292e;letter-spacing:-0.056px;-webkit-text-stroke:0.2px #24292e;"> kWh</span>
<span class="t" style="left:911.65px;top:278.00px;font-size:17.5px;color:#24292e;letter-spacing:0.595px;-webkit-text-stroke:0.2px #24292e;">£47.44</span>
<span class="t" style="left:1169.40px;top:278.00px;font-size:17.5px;color:#24292e;letter-spacing:-0.020px;-webkit-text-stroke:0.2px #24292e;">7.03</span>
<span class="t" style="left:1203.40px;top:279.00px;font-size:15px;color:#24292e;letter-spacing:0.944px;-webkit-text-stroke:0.2px #24292e;"> kWh</span>
<span class="t" style="left:1431.90px;top:278.00px;font-size:17.5px;color:#24292e;letter-spacing:1.150px;-webkit-text-stroke:0.2px #24292e;">262</span>
<span class="t" style="left:1463.40px;top:279.00px;font-size:15px;color:#24292e;letter-spacing:1.129px;-webkit-text-stroke:0.2px #24292e;"> W/m²</span>
<span class="t" style="left:781.40px;top:176.00px;font-size:18.6px;color:#56a64b;letter-spacing:-0.435px;">2.19%</span>
<span class="t" style="left:1310.25px;top:178.00px;font-size:14.9px;color:#56a64b;letter-spacing:0.473px;">100.3%</span>
<span class="t" style="left:37.80px;top:428.00px;font-size:13px;color:#24292e;letter-spacing:0.315px;">0 kWh</span>
<span class="t" style="left:38.40px;top:411.00px;font-size:13px;color:#24292e;letter-spacing:0.165px;">5 kWh</span>
<span class="t" style="left:32.60px;top:395.00px;font-size:13px;color:#24292e;letter-spacing:-0.154px;">10 kWh</span>
<span class="t" style="left:32.60px;top:378.00px;font-size:13px;color:#24292e;letter-spacing:-0.154px;">15 kWh</span>
<span class="t" style="left:30.40px;top:362.00px;font-size:13px;color:#24292e;letter-spacing:0.286px;">20 kWh</span>
<span class="t" style="left:57.20px;top:443.00px;font-size:13px;color:#24292e;letter-spacing:0.481px;">2023-01</span>
<span class="t" style="left:152.03px;top:443.00px;font-size:13px;color:#24292e;letter-spacing:0.481px;">2023-04</span>
<span class="t" style="left:247.91px;top:443.00px;font-size:13px;color:#24292e;letter-spacing:0.481px;">2023-07</span>
<span class="t" style="left:344.84px;top:443.00px;font-size:13px;color:#24292e;letter-spacing:0.481px;">2023-10</span>
<span class="t" style="left:441.78px;top:443.00px;font-size:13px;color:#24292e;letter-spacing:0.481px;">2024-01</span>
<span class="t" style="left:537.66px;top:443.00px;font-size:13px;color:#24292e;letter-spacing:0.481px;">2024-04</span>
<span class="t" style="left:633.54px;top:443.00px;font-size:13px;color:#24292e;letter-spacing:0.481px;">2024-07</span>
<span class="t" style="left:730.47px;top:443.00px;font-size:13px;color:#24292e;letter-spacing:0.481px;">2024-10</span>
<span class="t" style="left:827.40px;top:443.00px;font-size:13px;color:#24292e;letter-spacing:0.481px;width:33.4px;overflow:hidden;">2025-01</span>
<span class="t" style="left:52.60px;top:470.00px;font-size:13px;color:#24292e;letter-spacing:0.273px;">Fixed Shading Losses (kWh)</span>
<span class="t" style="left:259.90px;top:470.00px;font-size:13px;color:#24292e;letter-spacing:0.299px;">Variable Shading Losses (kWh)</span>
<span class="t" style="left:46.97px;top:628.00px;font-size:13px;color:#24292e;">0</span>
<span class="t" style="left:33.20px;top:611.00px;font-size:13px;color:#24292e;letter-spacing:-0.345px;">100</span>
<span class="t" style="left:31.30px;top:593.00px;font-size:13px;color:#24292e;letter-spacing:0.605px;">200</span>
<span class="t" style="left:31.30px;top:576.00px;font-size:13px;color:#24292e;letter-spacing:0.605px;">300</span>
<span class="t" style="left:35.20px;top:643.00px;font-size:13px;color:#24292e;letter-spacing:0.481px;">2023-01</span>
<span class="t" style="left:132.73px;top:643.00px;font-size:13px;color:#24292e;letter-spacing:0.481px;">2023-04</span>
<span class="t" style="left:231.35px;top:643.00px;font-size:13px;color:#24292e;letter-spacing:0.481px;">2023-07</span>
<span class="t" style="left:331.05px;top:643.00px;font-size:13px;color:#24292e;letter-spacing:0.481px;">2023-10</span>
<span class="t" style="left:430.74px;top:643.00px;font-size:13px;color:#24292e;letter-spacing:0.481px;">2024-01</span>
<span class="t" style="left:529.36px;top:643.00px;font-size:13px;color:#24292e;letter-spacing:0.481px;">2024-04</span>
<span class="t" style="left:627.98px;top:643.00px;font-size:13px;color:#24292e;letter-spacing:0.481px;">2024-07</span>
<span class="t" style="left:727.67px;top:643.00px;font-size:13px;color:#24292e;letter-spacing:0.481px;">2024-10</span>
<span class="t" style="left:827.37px;top:643.00px;font-size:13px;color:#24292e;letter-spacing:0.481px;width:33.4px;overflow:hidden;">2025-01</span>
<span class="t" style="left:52.60px;top:670.00px;font-size:13px;color:#24292e;letter-spacing:0.220px;">On-Site GHI</span>
<span class="t" style="left:159.10px;top:670.00px;font-size:13px;color:#24292e;">Satellite SSRD</span>
<span class="t" style="left:887.10px;top:377.00px;font-size:13px;color:#24292e;letter-spacing:1.062px;">40-45</span>
<span class="t" style="left:887.10px;top:408.00px;font-size:13px;color:#24292e;letter-spacing:1.062px;">35-40</span>
<span class="t" style="left:887.10px;top:439.00px;font-size:13px;color:#24292e;letter-spacing:1.062px;">30-35</span>
<span class="t" style="left:887.10px;top:471.00px;font-size:13px;color:#24292e;letter-spacing:1.062px;">25-30</span>
<span class="t" style="left:887.10px;top:502.00px;font-size:13px;color:#24292e;letter-spacing:1.062px;">20-25</span>
<span class="t" style="left:889.00px;top:533.00px;font-size:13px;color:#24292e;letter-spacing:0.587px;">15-20</span>
<span class="t" style="left:891.90px;top:565.00px;font-size:13px;color:#24292e;letter-spacing:-0.138px;">10-15</span>
<span class="t" style="left:898.80px;top:596.00px;font-size:13px;color:#24292e;letter-spacing:-0.073px;">5-10</span>
<span class="t" style="left:910.10px;top:628.00px;font-size:13px;color:#24292e;letter-spacing:0.448px;">2023-01</span>
<span class="t" style="left:989.53px;top:628.00px;font-size:13px;color:#24292e;letter-spacing:0.448px;">2023-04</span>
<span class="t" style="left:1069.85px;top:628.00px;font-size:13px;color:#24292e;letter-spacing:0.448px;">2023-07</span>
<span class="t" style="left:1151.05px;top:628.00px;font-size:13px;color:#24292e;letter-spacing:0.448px;">2023-10</span>
<span class="t" style="left:1232.25px;top:628.00px;font-size:13px;color:#24292e;letter-spacing:0.448px;">2024-01</span>
<span class="t" style="left:1312.57px;top:628.00px;font-size:13px;color:#24292e;letter-spacing:0.448px;">2024-04</span>
<span class="t" style="left:1392.88px;top:628.00px;font-size:13px;color:#24292e;letter-spacing:0.448px;">2024-07</span>
<span class="t" style="left:1474.08px;top:628.00px;font-size:13px;color:#24292e;letter-spacing:0.448px;">2024-10</span>
<span class="t" style="left:1554.48px;top:628.00px;font-size:13px;color:#24292e;letter-spacing:0.448px;width:34.5px;overflow:hidden;">2025-01</span>
<span class="t" style="left:913.10px;top:665.00px;font-size:11px;color:#8e9297;letter-spacing:1.018px;">0.505</span>
<span class="t" style="left:1207.39px;top:665.00px;font-size:11px;color:#8e9297;">1.42</span>
</body></html>
